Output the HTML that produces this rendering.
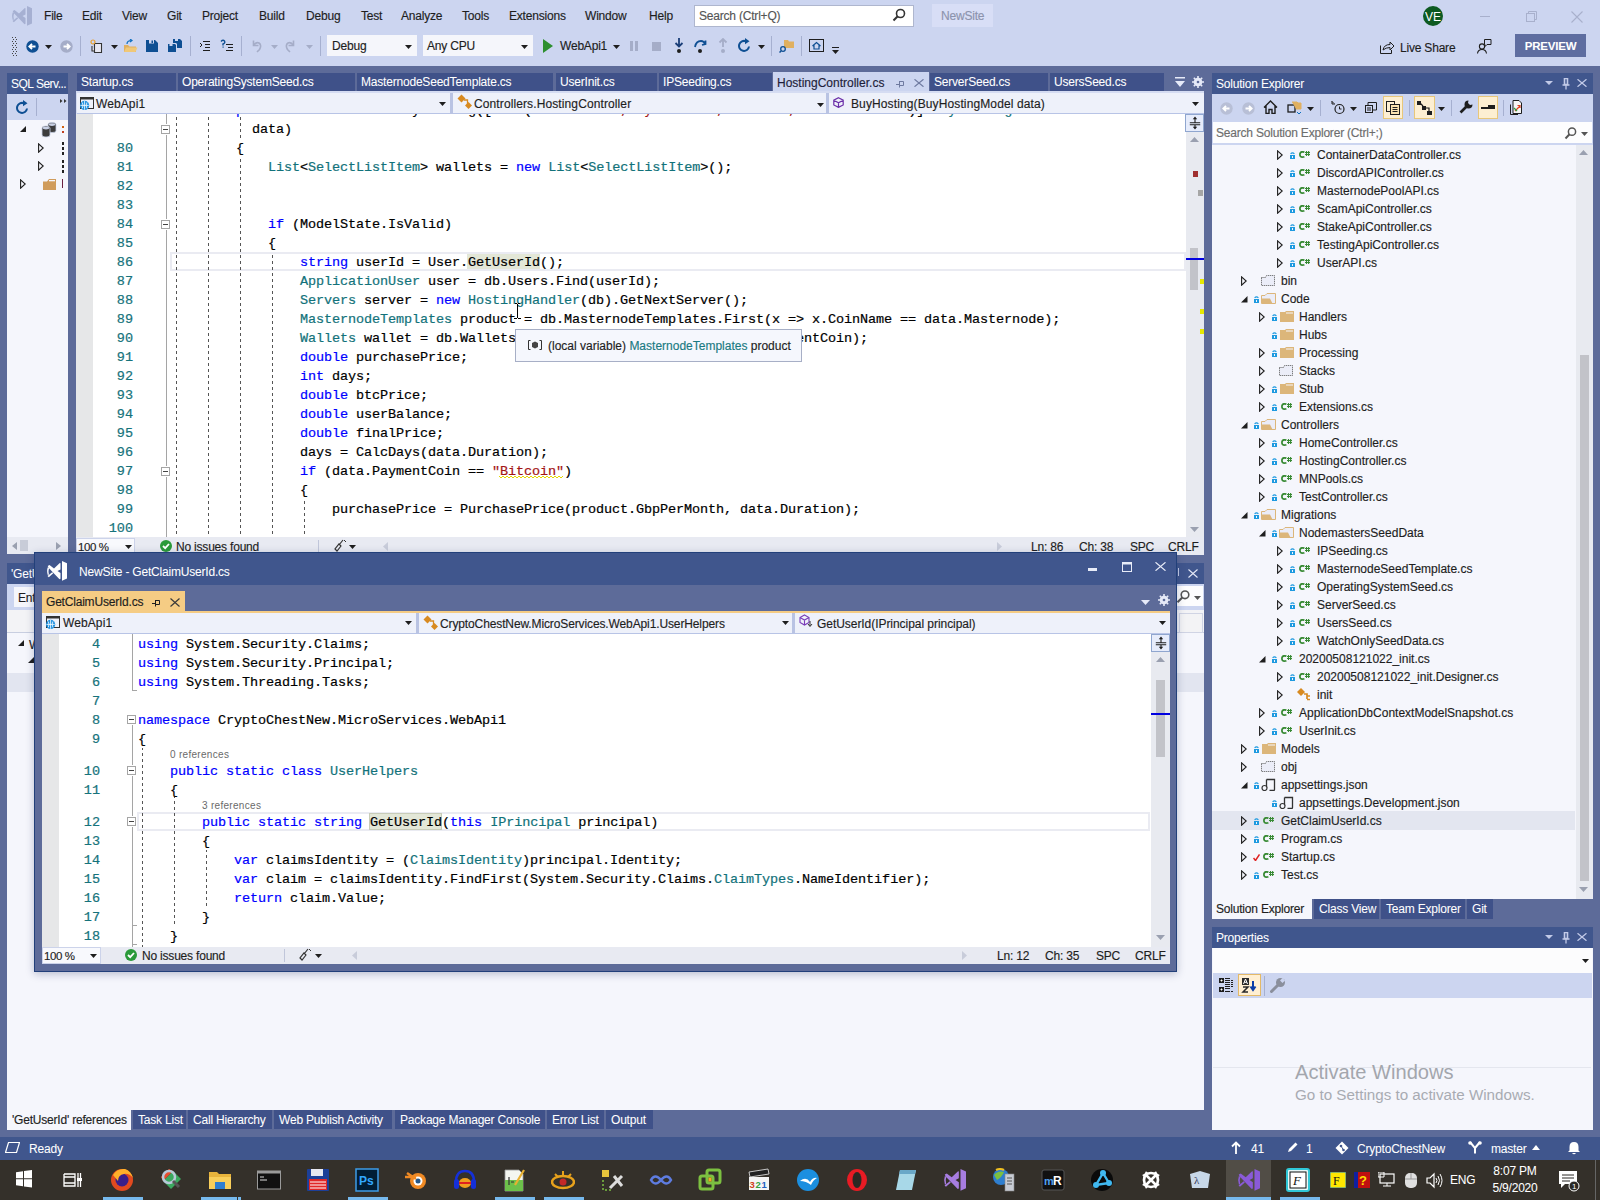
<!DOCTYPE html><html><head><meta charset="utf-8"><style>
*{margin:0;padding:0;box-sizing:border-box}
html,body{width:1600px;height:1200px;overflow:hidden;background:#CCD5F0;font-family:"Liberation Sans",sans-serif;font-size:12px;color:#1E1E1E}
.a{position:absolute}
.t{white-space:nowrap;line-height:16px;font-size:12px;letter-spacing:-0.2px;-webkit-text-stroke:0.15px currentColor}
.m{font-family:"Liberation Mono",monospace;white-space:pre;font-size:13.5px;letter-spacing:-0.1px;line-height:19px;color:#000;-webkit-text-stroke:0.2px currentColor}
.w{color:#fff}
.k{color:#0000FF}.ty{color:#12727A}.s{color:#A31515}
.ln{color:#16737B;text-align:right;letter-spacing:0}
</style></head><body><div class="a" style="left:0px;top:0px;width:1600px;height:66px;background:#CCD5F0;"></div>
<svg class="a" style="left:12px;top:6px;" width="20" height="20" viewBox="0 0 20 20"><path d="M0.7 5 L2.5 4 L7 7.5 L12.8 2 L13.5 2.3 V8.5 L10.5 10 L13.5 12 V17.8 L12.5 18.2 L1.5 6.8 Z M0.8 6.3 Q-0.6 10 0.8 14 L2 13.6 Q1 10 2.1 7.4 Z M0.5 15 L1.8 16.2 L6.2 12.3 L5.2 11.2 Z M15 0 L20 2.2 V17.5 L15 19.8 Z" fill="#A6B0D2"/></svg>
<div class="a t" style="left:44px;top:8px;color:#1E1E1E">File</div>
<div class="a t" style="left:82px;top:8px;color:#1E1E1E">Edit</div>
<div class="a t" style="left:122px;top:8px;color:#1E1E1E">View</div>
<div class="a t" style="left:167px;top:8px;color:#1E1E1E">Git</div>
<div class="a t" style="left:202px;top:8px;color:#1E1E1E">Project</div>
<div class="a t" style="left:259px;top:8px;color:#1E1E1E">Build</div>
<div class="a t" style="left:306px;top:8px;color:#1E1E1E">Debug</div>
<div class="a t" style="left:361px;top:8px;color:#1E1E1E">Test</div>
<div class="a t" style="left:401px;top:8px;color:#1E1E1E">Analyze</div>
<div class="a t" style="left:462px;top:8px;color:#1E1E1E">Tools</div>
<div class="a t" style="left:509px;top:8px;color:#1E1E1E">Extensions</div>
<div class="a t" style="left:585px;top:8px;color:#1E1E1E">Window</div>
<div class="a t" style="left:649px;top:8px;color:#1E1E1E">Help</div>
<div class="a" style="left:694px;top:5px;width:220px;height:22px;background:#FFFFFF;border:1px solid #AEB6CE"></div>
<div class="a t" style="left:699px;top:8px;color:#555">Search (Ctrl+Q)</div>
<svg class="a" style="left:892px;top:8px;" width="14" height="15" viewBox="0 0 14 15"><circle cx="8.5" cy="5.5" r="4" fill="none" stroke="#333" stroke-width="1.6"/><path d="M5.7 8.3 L1.5 12.5" stroke="#333" stroke-width="2"/></svg>
<div class="a" style="left:932px;top:4px;width:61px;height:23px;background:#D8DEF6;"></div>
<div class="a t" style="left:941px;top:8px;color:#8C93AD">NewSite</div>
<svg class="a" style="left:1423px;top:6px;" width="20" height="20" viewBox="0 0 20 20"><circle cx="10" cy="10" r="10" fill="#0D5A21"/><text x="10" y="14.5" text-anchor="middle" font-family="Liberation Sans" font-size="12" fill="#fff">VE</text></svg>
<div class="a" style="left:1480px;top:16px;width:10px;height:1px;background:#A8B0CC;"></div>
<svg class="a" style="left:1526px;top:11px;" width="11" height="11" viewBox="0 0 11 11"><rect x="0.5" y="2.5" width="8" height="8" fill="none" stroke="#A8B0CC"/><path d="M2.5 2.5V0.5H10.5V8.5H8.5" fill="none" stroke="#A8B0CC"/></svg>
<svg class="a" style="left:1571px;top:11px;" width="12" height="12" viewBox="0 0 12 12"><path d="M0.5 0.5L11.5 11.5M11.5 0.5L0.5 11.5" stroke="#A8B0CC" stroke-width="1.1"/></svg>
<div class="a" style="left:12px;top:37px;width:1px;height:1px;background:#444;"></div>
<div class="a" style="left:13px;top:39px;width:1px;height:1px;background:#444;"></div>
<div class="a" style="left:15px;top:37px;width:1px;height:1px;background:#444;"></div>
<div class="a" style="left:16px;top:39px;width:1px;height:1px;background:#444;"></div>
<div class="a" style="left:12px;top:41px;width:1px;height:1px;background:#444;"></div>
<div class="a" style="left:13px;top:43px;width:1px;height:1px;background:#444;"></div>
<div class="a" style="left:15px;top:41px;width:1px;height:1px;background:#444;"></div>
<div class="a" style="left:16px;top:43px;width:1px;height:1px;background:#444;"></div>
<div class="a" style="left:12px;top:45px;width:1px;height:1px;background:#444;"></div>
<div class="a" style="left:13px;top:47px;width:1px;height:1px;background:#444;"></div>
<div class="a" style="left:15px;top:45px;width:1px;height:1px;background:#444;"></div>
<div class="a" style="left:16px;top:47px;width:1px;height:1px;background:#444;"></div>
<div class="a" style="left:12px;top:49px;width:1px;height:1px;background:#444;"></div>
<div class="a" style="left:13px;top:51px;width:1px;height:1px;background:#444;"></div>
<div class="a" style="left:15px;top:49px;width:1px;height:1px;background:#444;"></div>
<div class="a" style="left:16px;top:51px;width:1px;height:1px;background:#444;"></div>
<div class="a" style="left:12px;top:53px;width:1px;height:1px;background:#444;"></div>
<div class="a" style="left:13px;top:55px;width:1px;height:1px;background:#444;"></div>
<div class="a" style="left:15px;top:53px;width:1px;height:1px;background:#444;"></div>
<div class="a" style="left:16px;top:55px;width:1px;height:1px;background:#444;"></div>
<svg class="a" style="left:26px;top:40px;" width="13" height="13" viewBox="0 0 13 13"><circle cx="6.5" cy="6.5" r="6.2" fill="#0E4F93"/><path d="M9.5 6.5H3.5M6 3.8L3.3 6.5L6 9.2" stroke="#fff" stroke-width="1.8" fill="none"/></svg>
<svg class="a" style="left:45px;top:45px;" width="7" height="4" viewBox="0 0 7 4"><path d="M0 0H7L3.5 4Z" fill="#1E1E1E"/></svg>
<svg class="a" style="left:60px;top:40px;" width="13" height="13" viewBox="0 0 13 13"><circle cx="6.5" cy="6.5" r="6.2" fill="#A5ADC8"/><path d="M3.5 6.5H9.5M7 3.8L9.7 6.5L7 9.2" stroke="#fff" stroke-width="1.8" fill="none"/></svg>
<div class="a" style="left:80px;top:36px;width:1px;height:20px;background:#A6B0D0;"></div>
<svg class="a" style="left:90px;top:39px;" width="14" height="15" viewBox="0 0 14 15"><path d="M4.5 4.5H11.5V13.5H4.5Z M2 7V12H5" fill="#E8E8F2" stroke="#333" stroke-width="1.1"/><circle cx="3" cy="3" r="2" fill="none" stroke="#E8A030" stroke-width="1.2"/></svg>
<svg class="a" style="left:111px;top:45px;" width="7" height="4" viewBox="0 0 7 4"><path d="M0 0H7L3.5 4Z" fill="#1E1E1E"/></svg>
<svg class="a" style="left:123px;top:39px;" width="15" height="14" viewBox="0 0 15 14"><path d="M1 6H5L6.5 7.5H13V13H1Z" fill="#E0B060"/><path d="M1 13L3 8.5H14.5L12.5 13Z" fill="#F0C878"/><path d="M4 5C4 2.5 6 1.5 8.5 1.5M7 0L9 1.5L7 3" stroke="#0E70C0" stroke-width="1.2" fill="none"/></svg>
<svg class="a" style="left:146px;top:40px;" width="12" height="12" viewBox="0 0 12 12"><path d="M0 0H9L12 3V12H0Z" fill="#0E4F93"/><rect x="3" y="0" width="5" height="3.5" fill="#CCD5F0"/><rect x="5.5" y="0.5" width="1.5" height="2.5" fill="#0E4F93"/></svg>
<svg class="a" style="left:168px;top:39px;" width="14" height="14" viewBox="0 0 14 14"><path d="M0 5H7L8 6V13H0Z" fill="#0E4F93"/><path d="M5 0H12L14 2V9H9V5L8 4H5Z" fill="#0E4F93"/><rect x="1.5" y="5" width="3" height="2" fill="#CCD5F0"/><rect x="7" y="0" width="3" height="2" fill="#CCD5F0"/></svg>
<div class="a" style="left:190px;top:36px;width:1px;height:20px;background:#A6B0D0;"></div>
<svg class="a" style="left:199px;top:40px;" width="12" height="12" viewBox="0 0 12 12"><path d="M4 1.5H11M6 4.5H11M6 7.5H11M4 10.5H11" stroke="#1E1E1E" stroke-width="1"/><path d="M1 3L3 5L1 7" stroke="#1E1E1E" fill="none"/></svg>
<svg class="a" style="left:220px;top:39px;" width="14" height="14" viewBox="0 0 14 14"><path d="M6 5.5H13M8 8.5H13M6 11.5H13" stroke="#1E1E1E"/><path d="M1 2.5Q3 0.5 4.5 2Q5.5 4 3 5V6.5" stroke="#0E4F93" stroke-width="1.4" fill="none"/><rect x="2.5" y="7.5" width="1.2" height="1.2" fill="#0E4F93"/></svg>
<div class="a" style="left:241px;top:36px;width:1px;height:20px;background:#A6B0D0;"></div>
<svg class="a" style="left:250px;top:39px;" width="12" height="14" viewBox="0 0 12 14"><path d="M3.5 1.5V6.5H8.5" stroke="#A5ADC8" stroke-width="1.6" fill="none"/><path d="M3.5 6.5Q6 2.5 9 4Q12 6 9.5 10.5L7 13" stroke="#A5ADC8" stroke-width="1.6" fill="none"/></svg>
<svg class="a" style="left:271px;top:45px;" width="7" height="4" viewBox="0 0 7 4"><path d="M0 0H7L3.5 4Z" fill="#A5ADC8"/></svg>
<svg class="a" style="left:285px;top:39px;" width="12" height="14" viewBox="0 0 12 14"><path d="M8.5 1.5V6.5H3.5" stroke="#A5ADC8" stroke-width="1.6" fill="none"/><path d="M8.5 6.5Q6 2.5 3 4Q0 6 2.5 10.5L5 13" stroke="#A5ADC8" stroke-width="1.6" fill="none"/></svg>
<svg class="a" style="left:306px;top:45px;" width="7" height="4" viewBox="0 0 7 4"><path d="M0 0H7L3.5 4Z" fill="#A5ADC8"/></svg>
<div class="a" style="left:320px;top:36px;width:1px;height:20px;background:#A6B0D0;"></div>
<div class="a" style="left:327px;top:35px;width:90px;height:21px;background:#F5F6FB;"></div>
<div class="a t" style="left:332px;top:38px;">Debug</div>
<svg class="a" style="left:405px;top:45px;" width="7" height="4" viewBox="0 0 7 4"><path d="M0 0H7L3.5 4Z" fill="#1E1E1E"/></svg>
<div class="a" style="left:423px;top:35px;width:110px;height:21px;background:#F5F6FB;"></div>
<div class="a t" style="left:427px;top:38px;">Any CPU</div>
<svg class="a" style="left:521px;top:45px;" width="7" height="4" viewBox="0 0 7 4"><path d="M0 0H7L3.5 4Z" fill="#1E1E1E"/></svg>
<svg class="a" style="left:543px;top:39px;" width="10" height="14" viewBox="0 0 10 14"><path d="M0 0L10 7L0 14Z" fill="#2C8F2F"/></svg>
<div class="a t" style="left:560px;top:38px;">WebApi1</div>
<svg class="a" style="left:613px;top:45px;" width="7" height="4" viewBox="0 0 7 4"><path d="M0 0H7L3.5 4Z" fill="#1E1E1E"/></svg>
<div class="a" style="left:630px;top:41px;width:3px;height:10px;background:#A5ADC8;"></div>
<div class="a" style="left:635px;top:41px;width:3px;height:10px;background:#A5ADC8;"></div>
<div class="a" style="left:652px;top:42px;width:9px;height:9px;background:#A5ADC8;"></div>
<svg class="a" style="left:674px;top:38px;" width="10" height="16" viewBox="0 0 10 16"><path d="M5 0V8M1.5 5L5 8.5L8.5 5" stroke="#1A3E78" stroke-width="1.8" fill="none"/><circle cx="5" cy="13" r="2" fill="#1E1E1E"/></svg>
<svg class="a" style="left:693px;top:39px;" width="14" height="15" viewBox="0 0 14 15"><path d="M2 8Q3 2 8 2Q11 2 12 5M9 6L12.5 5L12.5 1.5" stroke="#0E4F93" stroke-width="1.8" fill="none"/><circle cx="7" cy="12" r="2" fill="#1E1E1E"/></svg>
<svg class="a" style="left:718px;top:38px;" width="10" height="16" viewBox="0 0 10 16"><path d="M5 9V1M1.5 4.5L5 1L8.5 4.5" stroke="#A5ADC8" stroke-width="1.8" fill="none"/><circle cx="5" cy="13" r="2" fill="#A5ADC8"/></svg>
<svg class="a" style="left:738px;top:38px;" width="14" height="15" viewBox="0 0 14 15"><path d="M11 8.5A5 5 0 1 1 8 3.3" stroke="#0E4F93" stroke-width="2" fill="none"/><path d="M7 0L11.5 3.3L7 6.3Z" fill="#0E4F93"/></svg>
<svg class="a" style="left:758px;top:45px;" width="7" height="4" viewBox="0 0 7 4"><path d="M0 0H7L3.5 4Z" fill="#1E1E1E"/></svg>
<div class="a" style="left:771px;top:36px;width:1px;height:20px;background:#A6B0D0;"></div>
<svg class="a" style="left:779px;top:38px;" width="16" height="15" viewBox="0 0 16 15"><path d="M5 2H9L10 3.5H15V10H5Z" fill="#E0B060"/><circle cx="4" cy="11" r="2.3" fill="none" stroke="#0E4F93" stroke-width="1.3"/><path d="M2.3 12.8L0.5 14.5" stroke="#0E4F93" stroke-width="1.5"/></svg>
<div class="a" style="left:801px;top:36px;width:1px;height:20px;background:#A6B0D0;"></div>
<svg class="a" style="left:809px;top:39px;" width="15" height="13" viewBox="0 0 15 13"><rect x="0.5" y="0.5" width="14" height="12" fill="none" stroke="#1E1E1E"/><path d="M3.5 7L7.5 3.5L11.5 7M5 6V10H10V6" stroke="#0E4F93" stroke-width="1.2" fill="none"/></svg>
<div class="a" style="left:832px;top:47px;width:7px;height:1px;background:#1E1E1E;"></div>
<svg class="a" style="left:832px;top:50px;" width="7" height="4" viewBox="0 0 7 4"><path d="M0 0H7L3.5 4Z" fill="#1E1E1E"/></svg>
<svg class="a" style="left:1380px;top:40px;" width="15" height="14" viewBox="0 0 15 14"><path d="M0.5 5.5V13.5H11.5V10" stroke="#1E1E1E" fill="none"/><path d="M3 10Q4 4.5 10 4.5V2L14 6L10 10V7.5Q6 7.5 3 10Z" stroke="#1E1E1E" fill="none" stroke-linejoin="round"/></svg>
<div class="a t" style="left:1400px;top:40px;">Live Share</div>
<svg class="a" style="left:1477px;top:39px;" width="15" height="15" viewBox="0 0 15 15"><circle cx="5" cy="7.5" r="2.6" fill="none" stroke="#1E1E1E" stroke-width="1.1"/><path d="M0.5 14.5Q1 10.5 5 10.5Q9 10.5 9.5 14.5" fill="none" stroke="#1E1E1E" stroke-width="1.1"/><path d="M7.5 0.5H14V5.5H10L8 7.5V5.5H7.5Z" fill="none" stroke="#1E1E1E" stroke-width="1"/></svg>
<div class="a" style="left:1515px;top:34px;width:71px;height:23px;background:#5E6DA0;"></div>
<div class="a t" style="left:1515px;top:38px;width:71px;text-align:center;font-weight:bold;color:#fff;font-size:11.5px;-webkit-text-stroke:0.05px #fff">PREVIEW</div>
<div class="a" style="left:0px;top:66px;width:1600px;height:1071px;background:#5D6B99;"></div>
<div class="a" style="left:7px;top:73px;width:61px;height:21px;background:#40568D;"></div>
<div class="a t" style="left:11px;top:76px;color:#fff;letter-spacing:-0.5px;-webkit-text-stroke:0.05px #fff">SQL Serv...</div>
<div class="a" style="left:7px;top:94px;width:61px;height:26px;background:#CCD5F0;"></div>
<svg class="a" style="left:16px;top:100px;" width="13" height="14" viewBox="0 0 13 14"><path d="M11 8.5A5 5 0 1 1 8 3.3" stroke="#0E4F93" stroke-width="2" fill="none"/><path d="M7 0L11.5 3.3L7 6.3Z" fill="#0E4F93"/></svg>
<div class="a" style="left:36px;top:98px;width:1px;height:18px;background:#A6B0D0;"></div>
<svg class="a" style="left:60px;top:99px;" width="7" height="5" viewBox="0 0 7 5"><path d="M0 0L2.5 2L0 4ZM4 0L6.5 2L4 4Z" fill="#333"/></svg>
<div class="a" style="left:7px;top:120px;width:61px;height:417px;background:#F5F6FC;"></div>
<svg class="a" style="left:20px;top:126px;" width="6" height="6" viewBox="0 0 6 6"><path d="M6 0V6H0Z" fill="#1E1E1E"/></svg>
<svg class="a" style="left:41px;top:122px;" width="16" height="16" viewBox="0 0 16 16"><path d="M7 2.5Q7 0.5 11 0.5Q15 0.5 15 2.5V9Q15 10.5 11 10.5Q7 10.5 7 9Z" fill="#3C3C3C" stroke="#C8D0E4" stroke-width="0.8"/><ellipse cx="11" cy="2.6" rx="3.3" ry="1.3" fill="#C8D0E4"/><path d="M1 6Q1 4 5 4Q9 4 9 6V13Q9 15 5 15Q1 15 1 13Z" fill="#3C3C3C" stroke="#C8D0E4" stroke-width="0.8"/><ellipse cx="5" cy="6.1" rx="3.3" ry="1.3" fill="#C8D0E4"/></svg>
<div class="a" style="left:62px;top:126px;width:2px;height:2px;background:#D06010;"></div>
<div class="a" style="left:62px;top:131px;width:2px;height:2px;background:#C04020;"></div>
<svg class="a" style="left:38px;top:143px;" width="6" height="10" viewBox="0 0 6 10"><path d="M0.6 0.8L5.2 5L0.6 9.2Z" fill="none" stroke="#1E1E1E" stroke-width="1.1"/></svg>
<div class="a" style="left:62px;top:142px;width:2px;height:14px;background:transparent;background-image:linear-gradient(#222 70%,transparent 70%);background-size:2px 5px"></div>
<svg class="a" style="left:38px;top:161px;" width="6" height="10" viewBox="0 0 6 10"><path d="M0.6 0.8L5.2 5L0.6 9.2Z" fill="none" stroke="#1E1E1E" stroke-width="1.1"/></svg>
<div class="a" style="left:62px;top:160px;width:2px;height:14px;background:transparent;background-image:linear-gradient(#222 70%,transparent 70%);background-size:2px 5px"></div>
<svg class="a" style="left:20px;top:179px;" width="6" height="10" viewBox="0 0 6 10"><path d="M0.6 0.8L5.2 5L0.6 9.2Z" fill="none" stroke="#1E1E1E" stroke-width="1.1"/></svg>
<svg class="a" style="left:43px;top:179px;" width="14" height="11" viewBox="0 0 14 11"><path d="M0 2.5H4L6 0H13V11H0Z" fill="#D09C5C"/><rect x="6" y="1" width="6" height="1.3" fill="#F5F6FC"/></svg>
<div class="a" style="left:62px;top:179px;width:1px;height:9px;background:#6A2040;"></div>
<div class="a" style="left:7px;top:537px;width:61px;height:17px;background:#E8EAF2;"></div>
<svg class="a" style="left:12px;top:542px;" width="5" height="8" viewBox="0 0 5 8"><path d="M5 0V8L0 4Z" fill="#9AA0B0"/></svg>
<div class="a" style="left:20px;top:540px;width:8px;height:11px;background:#C8CCD8;"></div>
<svg class="a" style="left:56px;top:542px;" width="5" height="8" viewBox="0 0 5 8"><path d="M0 0V8L5 4Z" fill="#9AA0B0"/></svg>
<div class="a" style="left:77px;top:73px;width:99px;height:18px;background:#3F5189;"></div>
<div class="a t" style="left:81px;top:74px;color:#fff;-webkit-text-stroke:0.05px #fff">Startup.cs</div>
<div class="a" style="left:178px;top:73px;width:177px;height:18px;background:#3F5189;"></div>
<div class="a t" style="left:182px;top:74px;color:#fff;-webkit-text-stroke:0.05px #fff">OperatingSystemSeed.cs</div>
<div class="a" style="left:357px;top:73px;width:196px;height:18px;background:#3F5189;"></div>
<div class="a t" style="left:361px;top:74px;color:#fff;-webkit-text-stroke:0.05px #fff">MasternodeSeedTemplate.cs</div>
<div class="a" style="left:556px;top:73px;width:101px;height:18px;background:#3F5189;"></div>
<div class="a t" style="left:560px;top:74px;color:#fff;-webkit-text-stroke:0.05px #fff">UserInit.cs</div>
<div class="a" style="left:659px;top:73px;width:113px;height:18px;background:#3F5189;"></div>
<div class="a t" style="left:663px;top:74px;color:#fff;-webkit-text-stroke:0.05px #fff">IPSeeding.cs</div>
<div class="a" style="left:930px;top:73px;width:118px;height:18px;background:#3F5189;"></div>
<div class="a t" style="left:934px;top:74px;color:#fff;-webkit-text-stroke:0.05px #fff">ServerSeed.cs</div>
<div class="a" style="left:1050px;top:73px;width:114px;height:18px;background:#3F5189;"></div>
<div class="a t" style="left:1054px;top:74px;color:#fff;-webkit-text-stroke:0.05px #fff">UsersSeed.cs</div>
<div class="a" style="left:773px;top:72px;width:156px;height:19px;background:#CCD5F0;"></div>
<div class="a t" style="left:777px;top:75px;letter-spacing:0;color:#1E1E3A">HostingController.cs</div>
<svg class="a" style="left:896px;top:80px;" width="9" height="8" viewBox="0 0 9 8"><path d="M0 4.5H3.5M3.5 1V7.5M3.5 1.5H7.5V5.5H3.5" stroke="#6F7AA0" fill="none"/></svg>
<svg class="a" style="left:914px;top:79px;" width="10" height="8" viewBox="0 0 10 8"><path d="M0.5 0.3L9.5 7.7M9.5 0.3L0.5 7.7" stroke="#6F7AA0" stroke-width="1.2"/></svg>
<svg class="a" style="left:1175px;top:77px;" width="10" height="10" viewBox="0 0 10 10"><path d="M0 0H10V1.5H0Z M0 4H10L5 10Z" fill="#E6EAF8"/></svg>
<svg class="a" style="left:1192px;top:76px;" width="12" height="12" viewBox="0 0 12 12"><circle cx="6" cy="6" r="3.2" fill="none" stroke="#E6EAF8" stroke-width="2.2"/><path d="M6 0V12M0 6H12M1.8 1.8L10.2 10.2M10.2 1.8L1.8 10.2" stroke="#E6EAF8" stroke-width="1.6"/><circle cx="6" cy="6" r="1.3" fill="#5D6B99"/></svg>
<div class="a" style="left:76px;top:91px;width:1128px;height:23px;background:#D5DCF2;"></div>
<div class="a" style="left:77px;top:93px;width:1127px;height:21px;background:#EEF1FA;border-bottom:1px solid #B8C4E6"></div>
<div class="a" style="left:450px;top:93px;width:3px;height:21px;background:#B9C3E3;"></div>
<div class="a" style="left:826px;top:93px;width:3px;height:21px;background:#B9C3E3;"></div>
<svg class="a" style="left:80px;top:97px;" width="14" height="13" viewBox="0 0 14 13"><rect x="0.5" y="0.5" width="13" height="11" fill="#EEF1FA" stroke="#333"/><rect x="0.5" y="0.5" width="13" height="2" fill="#333"/><circle cx="4.6" cy="8.4" r="4.6" fill="#1E90E0"/><path d="M0.5 8.4H8.7M4.6 4V12.8M2.3 5.5Q3.8 8.4 2.3 11.3M6.9 5.5Q5.4 8.4 6.9 11.3" stroke="#fff" stroke-width="0.8" fill="none"/></svg>
<div class="a t" style="left:96px;top:96px;letter-spacing:0.1px">WebApi1</div>
<svg class="a" style="left:439px;top:102px;" width="7" height="4" viewBox="0 0 7 4"><path d="M0 0H7L3.5 4Z" fill="#1E1E1E"/></svg>
<svg class="a" style="left:457px;top:94px;" width="16" height="16" viewBox="0 0 16 16"><path d="M4.5 0.5L8.5 4.5L4.5 8.5L0.5 4.5Z" fill="#D88A20"/><path d="M7 6H10.5V11" stroke="#D88A20" stroke-width="1.3" fill="none"/><path d="M11.5 8L15 11.5L11.5 15L8 11.5Z" fill="#D88A20"/></svg>
<div class="a t" style="left:474px;top:96px;letter-spacing:0.11px">Controllers.HostingController</div>
<svg class="a" style="left:817px;top:103px;" width="7" height="4" viewBox="0 0 7 4"><path d="M0 0H7L3.5 4Z" fill="#1E1E1E"/></svg>
<svg class="a" style="left:833px;top:97px;" width="11" height="11" viewBox="0 0 11 11"><path d="M5.5 0.7L10.2 3.2V8L5.5 10.4L0.8 8V3.2Z M0.8 3.2L5.5 5.7L10.2 3.2M5.5 5.7V10.4" stroke="#6B2FA8" stroke-width="1.2" fill="none"/></svg>
<div class="a t" style="left:851px;top:96px;letter-spacing:0.12px">BuyHosting(BuyHostingModel data)</div>
<svg class="a" style="left:1192px;top:102px;" width="7" height="4" viewBox="0 0 7 4"><path d="M0 0H7L3.5 4Z" fill="#1E1E1E"/></svg>
<div class="a" style="left:76px;top:114px;width:1128px;height:423px;background:#fff;overflow:hidden">
<div class="a" style="left:0px;top:0px;width:17px;height:423px;background:#E6E7E8;"></div>
<div class="a" style="left:94px;top:138px;width:1016px;height:19px;background:transparent;border:2px solid #EAEBF2"></div>
<div class="a" style="left:391px;top:140px;width:73px;height:15px;background:#E3E7D7;"></div>
<div class="a m" style="left:176px;top:6px;">data)</div>
<div class="a m" style="left:160px;top:25px;">{</div>
<div class="a m" style="left:192px;top:44px;"><span class="ty">List</span>&lt;<span class="ty">SelectListItem</span>&gt; wallets = <span class="k">new</span> <span class="ty">List</span>&lt;<span class="ty">SelectListItem</span>&gt;();</div>
<div class="a m" style="left:192px;top:101px;"><span class="k">if</span> (ModelState.IsValid)</div>
<div class="a m" style="left:192px;top:120px;">{</div>
<div class="a m" style="left:224px;top:139px;"><span class="k">string</span> userId = User.GetUserId();</div>
<div class="a m" style="left:224px;top:158px;"><span class="ty">ApplicationUser</span> user = db.Users.Find(userId);</div>
<div class="a m" style="left:224px;top:177px;"><span class="ty">Servers</span> server = <span class="k">new</span> <span class="ty">HostingHandler</span>(db).GetNextServer();</div>
<div class="a m" style="left:224px;top:196px;"><span class="ty">MasternodeTemplates</span> product = db.MasternodeTemplates.First(x =&gt; x.CoinName == data.Masternode);</div>
<div class="a m" style="left:224px;top:215px;"><span class="ty">Wallets</span> wallet = db.Wallets.First(x =&gt; x.CoinName == data.PaymentCoin);</div>
<div class="a m" style="left:224px;top:234px;"><span class="k">double</span> purchasePrice;</div>
<div class="a m" style="left:224px;top:253px;"><span class="k">int</span> days;</div>
<div class="a m" style="left:224px;top:272px;"><span class="k">double</span> btcPrice;</div>
<div class="a m" style="left:224px;top:291px;"><span class="k">double</span> userBalance;</div>
<div class="a m" style="left:224px;top:310px;"><span class="k">double</span> finalPrice;</div>
<div class="a m" style="left:224px;top:329px;">days = CalcDays(data.Duration);</div>
<div class="a m" style="left:224px;top:348px;"><span class="k">if</span> (data.PaymentCoin == <span class="s">"Bitcoin"</span>)</div>
<div class="a m" style="left:224px;top:367px;">{</div>
<div class="a m" style="left:256px;top:386px;">purchasePrice = PurchasePrice(product.GbpPerMonth, data.Duration);</div>
<div class="a m" style="left:160px;top:-13px;"><span class="k">public</span> <span class="ty">ActionResult</span> BuyHosting([<span class="ty">Bind</span>(<span class="s">"Masternode,PaymentCoin,Duration,ServerNameTwo"</span>)] <span class="ty">BuyHostingModel</span></div>
<div class="a m ln" style="left:0px;top:25px;width:57px">80</div>
<div class="a m ln" style="left:0px;top:44px;width:57px">81</div>
<div class="a m ln" style="left:0px;top:63px;width:57px">82</div>
<div class="a m ln" style="left:0px;top:82px;width:57px">83</div>
<div class="a m ln" style="left:0px;top:101px;width:57px">84</div>
<div class="a m ln" style="left:0px;top:120px;width:57px">85</div>
<div class="a m ln" style="left:0px;top:139px;width:57px">86</div>
<div class="a m ln" style="left:0px;top:158px;width:57px">87</div>
<div class="a m ln" style="left:0px;top:177px;width:57px">88</div>
<div class="a m ln" style="left:0px;top:196px;width:57px">89</div>
<div class="a m ln" style="left:0px;top:215px;width:57px">90</div>
<div class="a m ln" style="left:0px;top:234px;width:57px">91</div>
<div class="a m ln" style="left:0px;top:253px;width:57px">92</div>
<div class="a m ln" style="left:0px;top:272px;width:57px">93</div>
<div class="a m ln" style="left:0px;top:291px;width:57px">94</div>
<div class="a m ln" style="left:0px;top:310px;width:57px">95</div>
<div class="a m ln" style="left:0px;top:329px;width:57px">96</div>
<div class="a m ln" style="left:0px;top:348px;width:57px">97</div>
<div class="a m ln" style="left:0px;top:367px;width:57px">98</div>
<div class="a m ln" style="left:0px;top:386px;width:57px">99</div>
<div class="a m ln" style="left:0px;top:405px;width:57px">100</div>
<div class="a" style="left:90px;top:0px;width:1px;height:423px;background:#A5A5A5;"></div>
<div class="a" style="left:85px;top:10px;width:9px;height:11px;background:#fff;"></div>
<div class="a" style="left:85px;top:11px;width:9px;height:9px;background:#fff;border:1px solid #A5A5A5"></div>
<div class="a" style="left:87px;top:15px;width:5px;height:1px;background:#444;"></div>
<div class="a" style="left:85px;top:105px;width:9px;height:11px;background:#fff;"></div>
<div class="a" style="left:85px;top:106px;width:9px;height:9px;background:#fff;border:1px solid #A5A5A5"></div>
<div class="a" style="left:87px;top:110px;width:5px;height:1px;background:#444;"></div>
<div class="a" style="left:85px;top:352px;width:9px;height:11px;background:#fff;"></div>
<div class="a" style="left:85px;top:353px;width:9px;height:9px;background:#fff;border:1px solid #A5A5A5"></div>
<div class="a" style="left:87px;top:357px;width:5px;height:1px;background:#444;"></div>
<div class="a" style="left:100px;top:0px;width:1px;height:423px;background:transparent;background-image:linear-gradient(transparent 50%,#555 50%);background-size:1px 6px;background-position:0 0px"></div>
<div class="a" style="left:132px;top:0px;width:1px;height:423px;background:transparent;background-image:linear-gradient(transparent 50%,#555 50%);background-size:1px 6px;background-position:0 0px"></div>
<div class="a" style="left:164px;top:0px;width:1px;height:24px;background:transparent;background-image:linear-gradient(transparent 50%,#555 50%);background-size:1px 6px;background-position:0 0px"></div>
<div class="a" style="left:164px;top:43px;width:1px;height:380px;background:transparent;background-image:linear-gradient(transparent 50%,#555 50%);background-size:1px 6px;background-position:0 5px"></div>
<div class="a" style="left:196px;top:138px;width:1px;height:285px;background:transparent;background-image:linear-gradient(transparent 50%,#555 50%);background-size:1px 6px;background-position:0 0px"></div>
<div class="a" style="left:228px;top:385px;width:1px;height:38px;background:transparent;background-image:linear-gradient(transparent 50%,#555 50%);background-size:1px 6px;background-position:0 5px"></div>
<svg class="a" style="left:423px;top:362px" width="64" height="4"><path d="M0 0L2 2L4 0L6 2L8 0L10 2L12 0L14 2L16 0L18 2L20 0L22 2L24 0L26 2L28 0L30 2L32 0L34 2L36 0L38 2L40 0L42 2L44 0L46 2L48 0L50 2L52 0L54 2L56 0L58 2L60 0L62 2L64 0" stroke="#E4D800" fill="none" stroke-width="1"/></svg>
<div class="a" style="left:1110px;top:0px;width:18px;height:423px;background:#E8EAF0;"></div>
<div class="a" style="left:1109px;top:0px;width:19px;height:18px;background:#E6ECFB;border:1px solid #8FA6CF"></div>
<svg class="a" style="left:1113px;top:2px" width="12" height="14"><path d="M6 2.5V6.5M6 8.5V11.5M0.8 6.8H11.2M0.8 8.8H11.2" stroke="#1E1E1E" stroke-width="1.1" fill="none"/><path d="M3.8 3.2L6 0.5L8.2 3.2Z M3.8 10.8L6 13.5L8.2 10.8Z" fill="#1E1E1E"/></svg>
<svg class="a" style="left:1114px;top:23px" width="9" height="5"><path d="M0 5L4.5 0L9 5Z" fill="#9AA0B0"/></svg>
<svg class="a" style="left:1114px;top:413px" width="9" height="5"><path d="M0 0L4.5 5L9 0Z" fill="#9AA0B0"/></svg>
<div class="a" style="left:1114px;top:134px;width:8px;height:42px;background:#C2C3C9;"></div>
<div class="a" style="left:1110px;top:144px;width:18px;height:2px;background:#0000E0;"></div>
<div class="a" style="left:1117px;top:57px;width:5px;height:6px;background:#A03030;"></div>
<div class="a" style="left:1122px;top:76px;width:5px;height:6px;background:#A6A6A6;"></div>
<div class="a" style="left:1124px;top:165px;width:4px;height:5px;background:#E8E800;"></div>
<div class="a" style="left:1124px;top:195px;width:4px;height:5px;background:#E8E800;"></div>
<div class="a" style="left:1124px;top:215px;width:4px;height:5px;background:#E8E800;"></div>
</div>
<div class="a" style="left:515px;top:303px;width:2px;height:1px;background:#000;"></div>
<div class="a" style="left:518px;top:303px;width:2px;height:1px;background:#000;"></div>
<div class="a" style="left:517px;top:304px;width:1px;height:14px;background:#000;"></div>
<div class="a" style="left:514px;top:318px;width:3px;height:1px;background:#000;"></div>
<div class="a" style="left:518px;top:318px;width:3px;height:1px;background:#000;"></div>
<div class="a" style="left:515px;top:329px;width:287px;height:33px;background:#F5F7FD;border:1px solid #A7AFC6"></div>
<svg class="a" style="left:528px;top:340px;" width="14" height="10" viewBox="0 0 14 10"><path d="M0.5 0.5H2.5M0.5 0.5V9.5H2.5M13.5 0.5H11.5M13.5 0.5V9.5H11.5" stroke="#333" fill="none"/><path d="M4 3L7 1.5L10 3V7L7 8.5L4 7Z" fill="#444"/></svg>
<div class="a t" style="left:548px;top:338px;letter-spacing:0">(local variable) <span style="color:#1A7A82">MasternodeTemplates</span> product</div>
<div class="a" style="left:76px;top:537px;width:1128px;height:18px;background:#E8EAF2;"></div>
<div class="a" style="left:76px;top:538px;width:59px;height:17px;background:#F8F9FD;border:1px solid #CCD3EA"></div>
<div class="a t" style="left:78px;top:539px;font-size:11.5px;letter-spacing:-0.4px">100 %</div>
<svg class="a" style="left:125px;top:545px;" width="7" height="4" viewBox="0 0 7 4"><path d="M0 0H7L3.5 4Z" fill="#1E1E1E"/></svg>
<svg class="a" style="left:160px;top:540px;" width="12" height="12" viewBox="0 0 12 12"><circle cx="6" cy="6" r="6" fill="#2A9A3A"/><path d="M3 6L5.2 8.2L9 4" stroke="#fff" stroke-width="1.8" fill="none"/></svg>
<div class="a t" style="left:176px;top:539px;">No issues found</div>
<div class="a" style="left:318px;top:540px;width:1px;height:13px;background:#C0C6DA;"></div>
<svg class="a" style="left:334px;top:539px;" width="13" height="14" viewBox="0 0 13 14"><path d="M9 1L5 6M7 7L3 12L1 10L5 5Z" stroke="#333" stroke-width="1.2" fill="none"/><path d="M10 1L12 3" stroke="#333"/></svg>
<svg class="a" style="left:349px;top:545px;" width="7" height="4" viewBox="0 0 7 4"><path d="M0 0H7L3.5 4Z" fill="#1E1E1E"/></svg>
<svg class="a" style="left:383px;top:542px;" width="5" height="9" viewBox="0 0 5 9"><path d="M5 0V9L0 4.5Z" fill="#C8CCDA"/></svg>
<svg class="a" style="left:997px;top:542px;" width="5" height="9" viewBox="0 0 5 9"><path d="M0 0V9L5 4.5Z" fill="#C8CCDA"/></svg>
<div class="a t" style="left:1031px;top:539px;font-size:12px">Ln: 86</div>
<div class="a t" style="left:1079px;top:539px;font-size:12px">Ch: 38</div>
<div class="a t" style="left:1130px;top:539px;font-size:12px">SPC</div>
<div class="a t" style="left:1168px;top:539px;font-size:12px">CRLF</div>
<div class="a" style="left:7px;top:563px;width:1197px;height:21px;background:#40568D;"></div>
<div class="a t" style="left:11px;top:566px;color:#fff;-webkit-text-stroke:0.05px #fff">'GetUserId' references</div>
<div class="a" style="left:7px;top:584px;width:1197px;height:26px;background:#CCD5F0;"></div>
<div class="a" style="left:14px;top:587px;width:300px;height:20px;background:#F5F6FB;"></div>
<div class="a t" style="left:18px;top:590px;">Entire Solution</div>
<div class="a" style="left:7px;top:610px;width:1197px;height:500px;background:#F5F6FC;"></div>
<div class="a" style="left:7px;top:610px;width:1197px;height:23px;background:#F3F3F6;border-bottom:1px solid #C8CEE0"></div>
<svg class="a" style="left:18px;top:640px;" width="6" height="6" viewBox="0 0 6 6"><path d="M6 0V6H0Z" fill="#1E1E1E"/></svg>
<div class="a t" style="left:29px;top:637px;">WebApi1</div>
<svg class="a" style="left:28px;top:657px;" width="6" height="6" viewBox="0 0 6 6"><path d="M6 0V6H0Z" fill="#1E1E1E"/></svg>
<div class="a" style="left:7px;top:673px;width:1197px;height:19px;background:#E2E5F0;"></div>
<div class="a" style="left:1000px;top:586px;width:203px;height:20px;background:#FDFDFE;"></div>
<svg class="a" style="left:1176px;top:590px;" width="14" height="13" viewBox="0 0 14 13"><circle cx="9" cy="4.8" r="3.8" fill="none" stroke="#555" stroke-width="1.6"/><path d="M6.3 7.5L1.5 12.3" stroke="#555" stroke-width="2"/></svg>
<svg class="a" style="left:1194px;top:596px;" width="7" height="4" viewBox="0 0 7 4"><path d="M0 0H7L3.5 4Z" fill="#555"/></svg>
<div class="a" style="left:1178px;top:568px;width:1px;height:8px;background:#C8D0EA;"></div>
<svg class="a" style="left:1188px;top:569px;" width="10" height="9" viewBox="0 0 10 9"><path d="M0.5 0.5L9.5 8.5M9.5 0.5L0.5 8.5" stroke="#E6EAF8" stroke-width="1.1"/></svg>
<div class="a" style="left:1179px;top:613px;width:24px;height:20px;background:#F3F3F5;border:1px solid #D0D4E4"></div>
<div class="a" style="left:7px;top:1110px;width:124px;height:20px;background:#F5F6FC;"></div>
<div class="a t" style="left:12px;top:1112px;">'GetUserId' references</div>
<div class="a" style="left:133px;top:1110px;width:53px;height:19px;background:#3F5189;"></div>
<div class="a t" style="left:138px;top:1112px;color:#fff;-webkit-text-stroke:0.05px #fff">Task List</div>
<div class="a" style="left:188px;top:1110px;width:84px;height:19px;background:#3F5189;"></div>
<div class="a t" style="left:193px;top:1112px;color:#fff;-webkit-text-stroke:0.05px #fff">Call Hierarchy</div>
<div class="a" style="left:274px;top:1110px;width:118px;height:19px;background:#3F5189;"></div>
<div class="a t" style="left:279px;top:1112px;color:#fff;-webkit-text-stroke:0.05px #fff">Web Publish Activity</div>
<div class="a" style="left:395px;top:1110px;width:150px;height:19px;background:#3F5189;"></div>
<div class="a t" style="left:400px;top:1112px;color:#fff;-webkit-text-stroke:0.05px #fff">Package Manager Console</div>
<div class="a" style="left:547px;top:1110px;width:57px;height:19px;background:#3F5189;"></div>
<div class="a t" style="left:552px;top:1112px;color:#fff;-webkit-text-stroke:0.05px #fff">Error List</div>
<div class="a" style="left:606px;top:1110px;width:47px;height:19px;background:#3F5189;"></div>
<div class="a t" style="left:611px;top:1112px;color:#fff;-webkit-text-stroke:0.05px #fff">Output</div>
<div class="a" style="left:1212px;top:73px;width:381px;height:21px;background:#40568D;"></div>
<div class="a t" style="left:1216px;top:76px;color:#fff;-webkit-text-stroke:0.05px #fff">Solution Explorer</div>
<svg class="a" style="left:1545px;top:81px;" width="8" height="4" viewBox="0 0 8 4"><path d="M0 0H8L4 4Z" fill="#C2CAE8"/></svg>
<svg class="a" style="left:1562px;top:78px;" width="8" height="12" viewBox="0 0 8 12"><path d="M2.5 0.5H5.5V6.5H2.5Z" fill="none" stroke="#C2CAE8" stroke-width="1.6"/><path d="M0.5 7H7.5M4 7V11.5" stroke="#C2CAE8" stroke-width="1.3"/></svg>
<svg class="a" style="left:1577px;top:79px;" width="10" height="8" viewBox="0 0 10 8"><path d="M0.5 0.3L9.5 7.7M9.5 0.3L0.5 7.7" stroke="#C2CAE8" stroke-width="1.3"/></svg>
<div class="a" style="left:1212px;top:94px;width:381px;height:26px;background:#CCD5F0;"></div>
<svg class="a" style="left:1220px;top:102px;" width="13" height="13" viewBox="0 0 13 13"><circle cx="6.5" cy="6.5" r="6.2" fill="#B8BFD6"/><path d="M9.5 6.5H3.5M6 3.8L3.3 6.5L6 9.2" stroke="#fff" stroke-width="1.8" fill="none"/></svg>
<svg class="a" style="left:1242px;top:102px;" width="13" height="13" viewBox="0 0 13 13"><circle cx="6.5" cy="6.5" r="6.2" fill="#B8BFD6"/><path d="M3.5 6.5H9.5M7 3.8L9.7 6.5L7 9.2" stroke="#fff" stroke-width="1.8" fill="none"/></svg>
<svg class="a" style="left:1263px;top:100px;" width="15" height="14" viewBox="0 0 15 14"><path d="M1 7.5L7.5 1L14 7.5M3 6V13.5H6V9.5H9V13.5H12V6" stroke="#1E1E1E" stroke-width="1.4" fill="none"/></svg>
<svg class="a" style="left:1287px;top:100px;" width="15" height="15" viewBox="0 0 15 15"><rect x="1" y="5" width="7" height="7" fill="none" stroke="#1E1E1E" stroke-width="1.3"/><path d="M5 2H10L11 3H14V9H9" fill="#E0B060" stroke="#E0B060"/><path d="M10 12L12 14L14 12" stroke="#0E70C0" fill="none"/></svg>
<svg class="a" style="left:1307px;top:107px;" width="7" height="4" viewBox="0 0 7 4"><path d="M0 0H7L3.5 4Z" fill="#1E1E1E"/></svg>
<div class="a" style="left:1320px;top:100px;width:1px;height:16px;background:#A6B0D0;"></div>
<svg class="a" style="left:1331px;top:100px;" width="15" height="15" viewBox="0 0 15 15"><circle cx="8.5" cy="9" r="4.5" fill="none" stroke="#1E1E1E" stroke-width="1.2"/><path d="M8.5 6.5V9H10.5M1 1.5L3 3.5M1 1V4H4" stroke="#1E1E1E" fill="none"/></svg>
<svg class="a" style="left:1350px;top:107px;" width="7" height="4" viewBox="0 0 7 4"><path d="M0 0H7L3.5 4Z" fill="#1E1E1E"/></svg>
<svg class="a" style="left:1365px;top:102px;" width="12" height="11" viewBox="0 0 12 11"><rect x="0.5" y="3.5" width="7" height="7" fill="#CCD5F0" stroke="#1E1E1E"/><path d="M3 3.5V0.5H11.5V8H7.5" fill="none" stroke="#1E1E1E"/><path d="M2 6H6M2 8H6" stroke="#1E1E1E"/></svg>
<div class="a" style="left:1383px;top:96px;width:20px;height:23px;background:#FDEFD2;border:1px solid #E8C77A"></div>
<svg class="a" style="left:1386px;top:101px;" width="14" height="14" viewBox="0 0 14 14"><rect x="0.5" y="0.5" width="8" height="10" fill="none" stroke="#1E1E1E"/><rect x="4.5" y="3.5" width="9" height="10" fill="#FBE3B0" stroke="#1E1E1E"/><path d="M6.5 6.5H11.5M6.5 8.5H11.5M6.5 10.5H11.5" stroke="#1E1E1E"/></svg>
<div class="a" style="left:1409px;top:100px;width:1px;height:16px;background:#A6B0D0;"></div>
<div class="a" style="left:1414px;top:96px;width:21px;height:23px;background:#FDEFD2;border:1px solid #E8C77A"></div>
<svg class="a" style="left:1417px;top:101px;" width="15" height="14" viewBox="0 0 15 14"><path d="M2 1L6 5M7 7H12V12" stroke="#1E1E1E" stroke-width="1.2" fill="none"/><rect x="0" y="0" width="4" height="4" fill="#1E1E1E"/><rect x="5" y="5" width="4" height="4" fill="#1E1E1E"/><rect x="10" y="10" width="5" height="4" fill="#1E1E1E"/></svg>
<svg class="a" style="left:1438px;top:107px;" width="7" height="4" viewBox="0 0 7 4"><path d="M0 0H7L3.5 4Z" fill="#1E1E1E"/></svg>
<div class="a" style="left:1451px;top:100px;width:1px;height:16px;background:#A6B0D0;"></div>
<svg class="a" style="left:1459px;top:100px;" width="14" height="14" viewBox="0 0 14 14"><path d="M1.5 12.5L7 7" stroke="#1E1E1E" stroke-width="2.6"/><path d="M9.5 0.5A4 4 0 1 0 13.5 4.5L11 5L9 3Z" fill="#1E1E1E"/></svg>
<div class="a" style="left:1478px;top:96px;width:20px;height:23px;background:#FDEFD2;border:1px solid #E8C77A"></div>
<div class="a" style="left:1481px;top:107px;width:14px;height:2px;background:#1E1E1E;"></div>
<div class="a" style="left:1488px;top:105px;width:7px;height:4px;background:#1E1E1E;"></div>
<div class="a" style="left:1503px;top:100px;width:1px;height:16px;background:#A6B0D0;"></div>
<svg class="a" style="left:1510px;top:100px;" width="14" height="15" viewBox="0 0 14 15"><path d="M3 0.5H9L11.5 3V13.5H3Z" fill="#F5F5F5" stroke="#1E1E1E"/><path d="M0.5 4.5V14.5H8" stroke="#1E1E1E" fill="none"/><path d="M5 11L10 6M7.5 5.5H10V8" stroke="#E04020" stroke-width="1.2" fill="none"/><path d="M4 8L7 11" stroke="#30A040" stroke-width="1.2"/></svg>
<div class="a" style="left:1212px;top:120px;width:381px;height:25px;background:#CCD5F0;"></div>
<div class="a" style="left:1213px;top:122px;width:379px;height:21px;background:#FDFDFE;"></div>
<div class="a t" style="left:1216px;top:125px;color:#6D6D6D">Search Solution Explorer (Ctrl+;)</div>
<svg class="a" style="left:1564px;top:127px;" width="13" height="13" viewBox="0 0 13 13"><circle cx="8" cy="4.7" r="3.6" fill="none" stroke="#555" stroke-width="1.5"/><path d="M5.5 7.3L1.5 11.5" stroke="#555" stroke-width="2"/></svg>
<svg class="a" style="left:1581px;top:132px;" width="7" height="4" viewBox="0 0 7 4"><path d="M0 0H7L3.5 4Z" fill="#555"/></svg>
<div class="a" style="left:1212px;top:145px;width:381px;height:754px;background:#F5F6FC;"></div>
<div class="a" style="left:1576px;top:145px;width:17px;height:754px;background:#E8EAF0;"></div>
<svg class="a" style="left:1579px;top:150px;" width="9" height="5" viewBox="0 0 9 5"><path d="M0 5L4.5 0L9 5Z" fill="#9AA0B0"/></svg>
<svg class="a" style="left:1579px;top:887px;" width="9" height="5" viewBox="0 0 9 5"><path d="M0 0L4.5 5L9 0Z" fill="#9AA0B0"/></svg>
<div class="a" style="left:1580px;top:355px;width:9px;height:526px;background:#C2C3C9;"></div>
<div class="a" style="left:1212px;top:811px;width:363px;height:19px;background:#E3E6F0;"></div>
<svg class="a" style="left:1277px;top:150px;" width="6" height="10" viewBox="0 0 6 10"><path d="M0.6 0.8L5.2 5L0.6 9.2Z" fill="none" stroke="#1E1E1E" stroke-width="1.1"/></svg>
<svg class="a" style="left:1290px;top:152px;" width="5" height="7" viewBox="0 0 5 7"><path d="M0.6 1.9Q2.5 -0.2 4.4 1.9" stroke="#1E9AE0" stroke-width="1.1" fill="none"/><rect x="0" y="3" width="5" height="4" fill="#1E9AE0"/><rect x="2" y="4" width="1" height="2" fill="#F5F6FC"/></svg>
<svg class="a" style="left:1299px;top:151px;" width="12" height="8" viewBox="0 0 12 8"><path d="M5.4 1.3Q4.6 0.8 3.4 0.8Q0.9 0.8 0.9 3.5Q0.9 6.2 3.4 6.2Q4.6 6.2 5.4 5.6" stroke="#388A34" stroke-width="1.7" fill="none"/><path d="M7.5 0V5M9.6 0V5M6 1.5H11M6 3.5H11" stroke="#388A34" stroke-width="1.1"/></svg>
<div class="a t" style="left:1317px;top:147px;letter-spacing:0">ContainerDataController.cs</div>
<svg class="a" style="left:1277px;top:168px;" width="6" height="10" viewBox="0 0 6 10"><path d="M0.6 0.8L5.2 5L0.6 9.2Z" fill="none" stroke="#1E1E1E" stroke-width="1.1"/></svg>
<svg class="a" style="left:1290px;top:170px;" width="5" height="7" viewBox="0 0 5 7"><path d="M0.6 1.9Q2.5 -0.2 4.4 1.9" stroke="#1E9AE0" stroke-width="1.1" fill="none"/><rect x="0" y="3" width="5" height="4" fill="#1E9AE0"/><rect x="2" y="4" width="1" height="2" fill="#F5F6FC"/></svg>
<svg class="a" style="left:1299px;top:169px;" width="12" height="8" viewBox="0 0 12 8"><path d="M5.4 1.3Q4.6 0.8 3.4 0.8Q0.9 0.8 0.9 3.5Q0.9 6.2 3.4 6.2Q4.6 6.2 5.4 5.6" stroke="#388A34" stroke-width="1.7" fill="none"/><path d="M7.5 0V5M9.6 0V5M6 1.5H11M6 3.5H11" stroke="#388A34" stroke-width="1.1"/></svg>
<div class="a t" style="left:1317px;top:165px;letter-spacing:0">DiscordAPIController.cs</div>
<svg class="a" style="left:1277px;top:186px;" width="6" height="10" viewBox="0 0 6 10"><path d="M0.6 0.8L5.2 5L0.6 9.2Z" fill="none" stroke="#1E1E1E" stroke-width="1.1"/></svg>
<svg class="a" style="left:1290px;top:188px;" width="5" height="7" viewBox="0 0 5 7"><path d="M0.6 1.9Q2.5 -0.2 4.4 1.9" stroke="#1E9AE0" stroke-width="1.1" fill="none"/><rect x="0" y="3" width="5" height="4" fill="#1E9AE0"/><rect x="2" y="4" width="1" height="2" fill="#F5F6FC"/></svg>
<svg class="a" style="left:1299px;top:187px;" width="12" height="8" viewBox="0 0 12 8"><path d="M5.4 1.3Q4.6 0.8 3.4 0.8Q0.9 0.8 0.9 3.5Q0.9 6.2 3.4 6.2Q4.6 6.2 5.4 5.6" stroke="#388A34" stroke-width="1.7" fill="none"/><path d="M7.5 0V5M9.6 0V5M6 1.5H11M6 3.5H11" stroke="#388A34" stroke-width="1.1"/></svg>
<div class="a t" style="left:1317px;top:183px;letter-spacing:0">MasternodePoolAPI.cs</div>
<svg class="a" style="left:1277px;top:204px;" width="6" height="10" viewBox="0 0 6 10"><path d="M0.6 0.8L5.2 5L0.6 9.2Z" fill="none" stroke="#1E1E1E" stroke-width="1.1"/></svg>
<svg class="a" style="left:1290px;top:206px;" width="5" height="7" viewBox="0 0 5 7"><path d="M0.6 1.9Q2.5 -0.2 4.4 1.9" stroke="#1E9AE0" stroke-width="1.1" fill="none"/><rect x="0" y="3" width="5" height="4" fill="#1E9AE0"/><rect x="2" y="4" width="1" height="2" fill="#F5F6FC"/></svg>
<svg class="a" style="left:1299px;top:205px;" width="12" height="8" viewBox="0 0 12 8"><path d="M5.4 1.3Q4.6 0.8 3.4 0.8Q0.9 0.8 0.9 3.5Q0.9 6.2 3.4 6.2Q4.6 6.2 5.4 5.6" stroke="#388A34" stroke-width="1.7" fill="none"/><path d="M7.5 0V5M9.6 0V5M6 1.5H11M6 3.5H11" stroke="#388A34" stroke-width="1.1"/></svg>
<div class="a t" style="left:1317px;top:201px;letter-spacing:0">ScamApiController.cs</div>
<svg class="a" style="left:1277px;top:222px;" width="6" height="10" viewBox="0 0 6 10"><path d="M0.6 0.8L5.2 5L0.6 9.2Z" fill="none" stroke="#1E1E1E" stroke-width="1.1"/></svg>
<svg class="a" style="left:1290px;top:224px;" width="5" height="7" viewBox="0 0 5 7"><path d="M0.6 1.9Q2.5 -0.2 4.4 1.9" stroke="#1E9AE0" stroke-width="1.1" fill="none"/><rect x="0" y="3" width="5" height="4" fill="#1E9AE0"/><rect x="2" y="4" width="1" height="2" fill="#F5F6FC"/></svg>
<svg class="a" style="left:1299px;top:223px;" width="12" height="8" viewBox="0 0 12 8"><path d="M5.4 1.3Q4.6 0.8 3.4 0.8Q0.9 0.8 0.9 3.5Q0.9 6.2 3.4 6.2Q4.6 6.2 5.4 5.6" stroke="#388A34" stroke-width="1.7" fill="none"/><path d="M7.5 0V5M9.6 0V5M6 1.5H11M6 3.5H11" stroke="#388A34" stroke-width="1.1"/></svg>
<div class="a t" style="left:1317px;top:219px;letter-spacing:0">StakeApiController.cs</div>
<svg class="a" style="left:1277px;top:240px;" width="6" height="10" viewBox="0 0 6 10"><path d="M0.6 0.8L5.2 5L0.6 9.2Z" fill="none" stroke="#1E1E1E" stroke-width="1.1"/></svg>
<svg class="a" style="left:1290px;top:242px;" width="5" height="7" viewBox="0 0 5 7"><path d="M0.6 1.9Q2.5 -0.2 4.4 1.9" stroke="#1E9AE0" stroke-width="1.1" fill="none"/><rect x="0" y="3" width="5" height="4" fill="#1E9AE0"/><rect x="2" y="4" width="1" height="2" fill="#F5F6FC"/></svg>
<svg class="a" style="left:1299px;top:241px;" width="12" height="8" viewBox="0 0 12 8"><path d="M5.4 1.3Q4.6 0.8 3.4 0.8Q0.9 0.8 0.9 3.5Q0.9 6.2 3.4 6.2Q4.6 6.2 5.4 5.6" stroke="#388A34" stroke-width="1.7" fill="none"/><path d="M7.5 0V5M9.6 0V5M6 1.5H11M6 3.5H11" stroke="#388A34" stroke-width="1.1"/></svg>
<div class="a t" style="left:1317px;top:237px;letter-spacing:0">TestingApiController.cs</div>
<svg class="a" style="left:1277px;top:258px;" width="6" height="10" viewBox="0 0 6 10"><path d="M0.6 0.8L5.2 5L0.6 9.2Z" fill="none" stroke="#1E1E1E" stroke-width="1.1"/></svg>
<svg class="a" style="left:1290px;top:260px;" width="5" height="7" viewBox="0 0 5 7"><path d="M0.6 1.9Q2.5 -0.2 4.4 1.9" stroke="#1E9AE0" stroke-width="1.1" fill="none"/><rect x="0" y="3" width="5" height="4" fill="#1E9AE0"/><rect x="2" y="4" width="1" height="2" fill="#F5F6FC"/></svg>
<svg class="a" style="left:1299px;top:259px;" width="12" height="8" viewBox="0 0 12 8"><path d="M5.4 1.3Q4.6 0.8 3.4 0.8Q0.9 0.8 0.9 3.5Q0.9 6.2 3.4 6.2Q4.6 6.2 5.4 5.6" stroke="#388A34" stroke-width="1.7" fill="none"/><path d="M7.5 0V5M9.6 0V5M6 1.5H11M6 3.5H11" stroke="#388A34" stroke-width="1.1"/></svg>
<div class="a t" style="left:1317px;top:255px;letter-spacing:0">UserAPI.cs</div>
<svg class="a" style="left:1241px;top:276px;" width="6" height="10" viewBox="0 0 6 10"><path d="M0.6 0.8L5.2 5L0.6 9.2Z" fill="none" stroke="#1E1E1E" stroke-width="1.1"/></svg>
<svg class="a" style="left:1261px;top:275px;" width="14" height="11" viewBox="0 0 14 11"><path d="M0.5 2.5H4.5L5.5 0.5H13.5V10.5H0.5Z" fill="#EBEDF8" stroke="#555" stroke-dasharray="1 1"/></svg>
<div class="a t" style="left:1281px;top:273px;letter-spacing:0">bin</div>
<svg class="a" style="left:1241px;top:296px;" width="7" height="7" viewBox="0 0 7 7"><path d="M6.5 0V6.5H0Z" fill="#1E1E1E"/></svg>
<svg class="a" style="left:1254px;top:296px;" width="5" height="7" viewBox="0 0 5 7"><path d="M0.6 1.9Q2.5 -0.2 4.4 1.9" stroke="#1E9AE0" stroke-width="1.1" fill="none"/><rect x="0" y="3" width="5" height="4" fill="#1E9AE0"/><rect x="2" y="4" width="1" height="2" fill="#F5F6FC"/></svg>
<svg class="a" style="left:1261px;top:292px;" width="15" height="12" viewBox="0 0 15 12"><path d="M0.5 3.5H4L6 1.5H14.5V11.5H0.5Z" fill="#EBEDF8" stroke="#DCB67A"/><path d="M0 6.5H9L11.5 11.5H1Z" fill="#DCB67A"/></svg>
<div class="a t" style="left:1281px;top:291px;letter-spacing:0">Code</div>
<svg class="a" style="left:1259px;top:312px;" width="6" height="10" viewBox="0 0 6 10"><path d="M0.6 0.8L5.2 5L0.6 9.2Z" fill="none" stroke="#1E1E1E" stroke-width="1.1"/></svg>
<svg class="a" style="left:1272px;top:314px;" width="5" height="7" viewBox="0 0 5 7"><path d="M0.6 1.9Q2.5 -0.2 4.4 1.9" stroke="#1E9AE0" stroke-width="1.1" fill="none"/><rect x="0" y="3" width="5" height="4" fill="#1E9AE0"/><rect x="2" y="4" width="1" height="2" fill="#F5F6FC"/></svg>
<svg class="a" style="left:1280px;top:311px;" width="14" height="11" viewBox="0 0 14 11"><path d="M0 1H5L6 0H14V11H0Z" fill="#DCB67A"/><rect x="6" y="1.5" width="7" height="1" fill="#F5F6FC"/></svg>
<div class="a t" style="left:1299px;top:309px;letter-spacing:0">Handlers</div>
<svg class="a" style="left:1272px;top:332px;" width="5" height="7" viewBox="0 0 5 7"><path d="M0.6 1.9Q2.5 -0.2 4.4 1.9" stroke="#1E9AE0" stroke-width="1.1" fill="none"/><rect x="0" y="3" width="5" height="4" fill="#1E9AE0"/><rect x="2" y="4" width="1" height="2" fill="#F5F6FC"/></svg>
<svg class="a" style="left:1280px;top:329px;" width="14" height="11" viewBox="0 0 14 11"><path d="M0 1H5L6 0H14V11H0Z" fill="#DCB67A"/><rect x="6" y="1.5" width="7" height="1" fill="#F5F6FC"/></svg>
<div class="a t" style="left:1299px;top:327px;letter-spacing:0">Hubs</div>
<svg class="a" style="left:1259px;top:348px;" width="6" height="10" viewBox="0 0 6 10"><path d="M0.6 0.8L5.2 5L0.6 9.2Z" fill="none" stroke="#1E1E1E" stroke-width="1.1"/></svg>
<svg class="a" style="left:1272px;top:350px;" width="5" height="7" viewBox="0 0 5 7"><path d="M0.6 1.9Q2.5 -0.2 4.4 1.9" stroke="#1E9AE0" stroke-width="1.1" fill="none"/><rect x="0" y="3" width="5" height="4" fill="#1E9AE0"/><rect x="2" y="4" width="1" height="2" fill="#F5F6FC"/></svg>
<svg class="a" style="left:1280px;top:347px;" width="14" height="11" viewBox="0 0 14 11"><path d="M0 1H5L6 0H14V11H0Z" fill="#DCB67A"/><rect x="6" y="1.5" width="7" height="1" fill="#F5F6FC"/></svg>
<div class="a t" style="left:1299px;top:345px;letter-spacing:0">Processing</div>
<svg class="a" style="left:1259px;top:366px;" width="6" height="10" viewBox="0 0 6 10"><path d="M0.6 0.8L5.2 5L0.6 9.2Z" fill="none" stroke="#1E1E1E" stroke-width="1.1"/></svg>
<svg class="a" style="left:1279px;top:365px;" width="14" height="11" viewBox="0 0 14 11"><path d="M0.5 2.5H4.5L5.5 0.5H13.5V10.5H0.5Z" fill="#EBEDF8" stroke="#555" stroke-dasharray="1 1"/></svg>
<div class="a t" style="left:1299px;top:363px;letter-spacing:0">Stacks</div>
<svg class="a" style="left:1259px;top:384px;" width="6" height="10" viewBox="0 0 6 10"><path d="M0.6 0.8L5.2 5L0.6 9.2Z" fill="none" stroke="#1E1E1E" stroke-width="1.1"/></svg>
<svg class="a" style="left:1272px;top:386px;" width="5" height="7" viewBox="0 0 5 7"><path d="M0.6 1.9Q2.5 -0.2 4.4 1.9" stroke="#1E9AE0" stroke-width="1.1" fill="none"/><rect x="0" y="3" width="5" height="4" fill="#1E9AE0"/><rect x="2" y="4" width="1" height="2" fill="#F5F6FC"/></svg>
<svg class="a" style="left:1280px;top:383px;" width="14" height="11" viewBox="0 0 14 11"><path d="M0 1H5L6 0H14V11H0Z" fill="#DCB67A"/><rect x="6" y="1.5" width="7" height="1" fill="#F5F6FC"/></svg>
<div class="a t" style="left:1299px;top:381px;letter-spacing:0">Stub</div>
<svg class="a" style="left:1259px;top:402px;" width="6" height="10" viewBox="0 0 6 10"><path d="M0.6 0.8L5.2 5L0.6 9.2Z" fill="none" stroke="#1E1E1E" stroke-width="1.1"/></svg>
<svg class="a" style="left:1272px;top:404px;" width="5" height="7" viewBox="0 0 5 7"><path d="M0.6 1.9Q2.5 -0.2 4.4 1.9" stroke="#1E9AE0" stroke-width="1.1" fill="none"/><rect x="0" y="3" width="5" height="4" fill="#1E9AE0"/><rect x="2" y="4" width="1" height="2" fill="#F5F6FC"/></svg>
<svg class="a" style="left:1281px;top:403px;" width="12" height="8" viewBox="0 0 12 8"><path d="M5.4 1.3Q4.6 0.8 3.4 0.8Q0.9 0.8 0.9 3.5Q0.9 6.2 3.4 6.2Q4.6 6.2 5.4 5.6" stroke="#388A34" stroke-width="1.7" fill="none"/><path d="M7.5 0V5M9.6 0V5M6 1.5H11M6 3.5H11" stroke="#388A34" stroke-width="1.1"/></svg>
<div class="a t" style="left:1299px;top:399px;letter-spacing:0">Extensions.cs</div>
<svg class="a" style="left:1241px;top:422px;" width="7" height="7" viewBox="0 0 7 7"><path d="M6.5 0V6.5H0Z" fill="#1E1E1E"/></svg>
<svg class="a" style="left:1254px;top:422px;" width="5" height="7" viewBox="0 0 5 7"><path d="M0.6 1.9Q2.5 -0.2 4.4 1.9" stroke="#1E9AE0" stroke-width="1.1" fill="none"/><rect x="0" y="3" width="5" height="4" fill="#1E9AE0"/><rect x="2" y="4" width="1" height="2" fill="#F5F6FC"/></svg>
<svg class="a" style="left:1261px;top:418px;" width="15" height="12" viewBox="0 0 15 12"><path d="M0.5 3.5H4L6 1.5H14.5V11.5H0.5Z" fill="#EBEDF8" stroke="#DCB67A"/><path d="M0 6.5H9L11.5 11.5H1Z" fill="#DCB67A"/></svg>
<div class="a t" style="left:1281px;top:417px;letter-spacing:0">Controllers</div>
<svg class="a" style="left:1259px;top:438px;" width="6" height="10" viewBox="0 0 6 10"><path d="M0.6 0.8L5.2 5L0.6 9.2Z" fill="none" stroke="#1E1E1E" stroke-width="1.1"/></svg>
<svg class="a" style="left:1272px;top:440px;" width="5" height="7" viewBox="0 0 5 7"><path d="M0.6 1.9Q2.5 -0.2 4.4 1.9" stroke="#1E9AE0" stroke-width="1.1" fill="none"/><rect x="0" y="3" width="5" height="4" fill="#1E9AE0"/><rect x="2" y="4" width="1" height="2" fill="#F5F6FC"/></svg>
<svg class="a" style="left:1281px;top:439px;" width="12" height="8" viewBox="0 0 12 8"><path d="M5.4 1.3Q4.6 0.8 3.4 0.8Q0.9 0.8 0.9 3.5Q0.9 6.2 3.4 6.2Q4.6 6.2 5.4 5.6" stroke="#388A34" stroke-width="1.7" fill="none"/><path d="M7.5 0V5M9.6 0V5M6 1.5H11M6 3.5H11" stroke="#388A34" stroke-width="1.1"/></svg>
<div class="a t" style="left:1299px;top:435px;letter-spacing:0">HomeController.cs</div>
<svg class="a" style="left:1259px;top:456px;" width="6" height="10" viewBox="0 0 6 10"><path d="M0.6 0.8L5.2 5L0.6 9.2Z" fill="none" stroke="#1E1E1E" stroke-width="1.1"/></svg>
<svg class="a" style="left:1272px;top:458px;" width="5" height="7" viewBox="0 0 5 7"><path d="M0.6 1.9Q2.5 -0.2 4.4 1.9" stroke="#1E9AE0" stroke-width="1.1" fill="none"/><rect x="0" y="3" width="5" height="4" fill="#1E9AE0"/><rect x="2" y="4" width="1" height="2" fill="#F5F6FC"/></svg>
<svg class="a" style="left:1281px;top:457px;" width="12" height="8" viewBox="0 0 12 8"><path d="M5.4 1.3Q4.6 0.8 3.4 0.8Q0.9 0.8 0.9 3.5Q0.9 6.2 3.4 6.2Q4.6 6.2 5.4 5.6" stroke="#388A34" stroke-width="1.7" fill="none"/><path d="M7.5 0V5M9.6 0V5M6 1.5H11M6 3.5H11" stroke="#388A34" stroke-width="1.1"/></svg>
<div class="a t" style="left:1299px;top:453px;letter-spacing:0">HostingController.cs</div>
<svg class="a" style="left:1259px;top:474px;" width="6" height="10" viewBox="0 0 6 10"><path d="M0.6 0.8L5.2 5L0.6 9.2Z" fill="none" stroke="#1E1E1E" stroke-width="1.1"/></svg>
<svg class="a" style="left:1272px;top:476px;" width="5" height="7" viewBox="0 0 5 7"><path d="M0.6 1.9Q2.5 -0.2 4.4 1.9" stroke="#1E9AE0" stroke-width="1.1" fill="none"/><rect x="0" y="3" width="5" height="4" fill="#1E9AE0"/><rect x="2" y="4" width="1" height="2" fill="#F5F6FC"/></svg>
<svg class="a" style="left:1281px;top:475px;" width="12" height="8" viewBox="0 0 12 8"><path d="M5.4 1.3Q4.6 0.8 3.4 0.8Q0.9 0.8 0.9 3.5Q0.9 6.2 3.4 6.2Q4.6 6.2 5.4 5.6" stroke="#388A34" stroke-width="1.7" fill="none"/><path d="M7.5 0V5M9.6 0V5M6 1.5H11M6 3.5H11" stroke="#388A34" stroke-width="1.1"/></svg>
<div class="a t" style="left:1299px;top:471px;letter-spacing:0">MNPools.cs</div>
<svg class="a" style="left:1259px;top:492px;" width="6" height="10" viewBox="0 0 6 10"><path d="M0.6 0.8L5.2 5L0.6 9.2Z" fill="none" stroke="#1E1E1E" stroke-width="1.1"/></svg>
<svg class="a" style="left:1272px;top:494px;" width="5" height="7" viewBox="0 0 5 7"><path d="M0.6 1.9Q2.5 -0.2 4.4 1.9" stroke="#1E9AE0" stroke-width="1.1" fill="none"/><rect x="0" y="3" width="5" height="4" fill="#1E9AE0"/><rect x="2" y="4" width="1" height="2" fill="#F5F6FC"/></svg>
<svg class="a" style="left:1281px;top:493px;" width="12" height="8" viewBox="0 0 12 8"><path d="M5.4 1.3Q4.6 0.8 3.4 0.8Q0.9 0.8 0.9 3.5Q0.9 6.2 3.4 6.2Q4.6 6.2 5.4 5.6" stroke="#388A34" stroke-width="1.7" fill="none"/><path d="M7.5 0V5M9.6 0V5M6 1.5H11M6 3.5H11" stroke="#388A34" stroke-width="1.1"/></svg>
<div class="a t" style="left:1299px;top:489px;letter-spacing:0">TestController.cs</div>
<svg class="a" style="left:1241px;top:512px;" width="7" height="7" viewBox="0 0 7 7"><path d="M6.5 0V6.5H0Z" fill="#1E1E1E"/></svg>
<svg class="a" style="left:1254px;top:512px;" width="5" height="7" viewBox="0 0 5 7"><path d="M0.6 1.9Q2.5 -0.2 4.4 1.9" stroke="#1E9AE0" stroke-width="1.1" fill="none"/><rect x="0" y="3" width="5" height="4" fill="#1E9AE0"/><rect x="2" y="4" width="1" height="2" fill="#F5F6FC"/></svg>
<svg class="a" style="left:1261px;top:508px;" width="15" height="12" viewBox="0 0 15 12"><path d="M0.5 3.5H4L6 1.5H14.5V11.5H0.5Z" fill="#EBEDF8" stroke="#DCB67A"/><path d="M0 6.5H9L11.5 11.5H1Z" fill="#DCB67A"/></svg>
<div class="a t" style="left:1281px;top:507px;letter-spacing:0">Migrations</div>
<svg class="a" style="left:1259px;top:530px;" width="7" height="7" viewBox="0 0 7 7"><path d="M6.5 0V6.5H0Z" fill="#1E1E1E"/></svg>
<svg class="a" style="left:1272px;top:530px;" width="5" height="7" viewBox="0 0 5 7"><path d="M0.6 1.9Q2.5 -0.2 4.4 1.9" stroke="#1E9AE0" stroke-width="1.1" fill="none"/><rect x="0" y="3" width="5" height="4" fill="#1E9AE0"/><rect x="2" y="4" width="1" height="2" fill="#F5F6FC"/></svg>
<svg class="a" style="left:1279px;top:526px;" width="15" height="12" viewBox="0 0 15 12"><path d="M0.5 3.5H4L6 1.5H14.5V11.5H0.5Z" fill="#EBEDF8" stroke="#DCB67A"/><path d="M0 6.5H9L11.5 11.5H1Z" fill="#DCB67A"/></svg>
<div class="a t" style="left:1299px;top:525px;letter-spacing:0">NodemastersSeedData</div>
<svg class="a" style="left:1277px;top:546px;" width="6" height="10" viewBox="0 0 6 10"><path d="M0.6 0.8L5.2 5L0.6 9.2Z" fill="none" stroke="#1E1E1E" stroke-width="1.1"/></svg>
<svg class="a" style="left:1290px;top:548px;" width="5" height="7" viewBox="0 0 5 7"><path d="M0.6 1.9Q2.5 -0.2 4.4 1.9" stroke="#1E9AE0" stroke-width="1.1" fill="none"/><rect x="0" y="3" width="5" height="4" fill="#1E9AE0"/><rect x="2" y="4" width="1" height="2" fill="#F5F6FC"/></svg>
<svg class="a" style="left:1299px;top:547px;" width="12" height="8" viewBox="0 0 12 8"><path d="M5.4 1.3Q4.6 0.8 3.4 0.8Q0.9 0.8 0.9 3.5Q0.9 6.2 3.4 6.2Q4.6 6.2 5.4 5.6" stroke="#388A34" stroke-width="1.7" fill="none"/><path d="M7.5 0V5M9.6 0V5M6 1.5H11M6 3.5H11" stroke="#388A34" stroke-width="1.1"/></svg>
<div class="a t" style="left:1317px;top:543px;letter-spacing:0">IPSeeding.cs</div>
<svg class="a" style="left:1277px;top:564px;" width="6" height="10" viewBox="0 0 6 10"><path d="M0.6 0.8L5.2 5L0.6 9.2Z" fill="none" stroke="#1E1E1E" stroke-width="1.1"/></svg>
<svg class="a" style="left:1290px;top:566px;" width="5" height="7" viewBox="0 0 5 7"><path d="M0.6 1.9Q2.5 -0.2 4.4 1.9" stroke="#1E9AE0" stroke-width="1.1" fill="none"/><rect x="0" y="3" width="5" height="4" fill="#1E9AE0"/><rect x="2" y="4" width="1" height="2" fill="#F5F6FC"/></svg>
<svg class="a" style="left:1299px;top:565px;" width="12" height="8" viewBox="0 0 12 8"><path d="M5.4 1.3Q4.6 0.8 3.4 0.8Q0.9 0.8 0.9 3.5Q0.9 6.2 3.4 6.2Q4.6 6.2 5.4 5.6" stroke="#388A34" stroke-width="1.7" fill="none"/><path d="M7.5 0V5M9.6 0V5M6 1.5H11M6 3.5H11" stroke="#388A34" stroke-width="1.1"/></svg>
<div class="a t" style="left:1317px;top:561px;letter-spacing:0">MasternodeSeedTemplate.cs</div>
<svg class="a" style="left:1277px;top:582px;" width="6" height="10" viewBox="0 0 6 10"><path d="M0.6 0.8L5.2 5L0.6 9.2Z" fill="none" stroke="#1E1E1E" stroke-width="1.1"/></svg>
<svg class="a" style="left:1290px;top:584px;" width="5" height="7" viewBox="0 0 5 7"><path d="M0.6 1.9Q2.5 -0.2 4.4 1.9" stroke="#1E9AE0" stroke-width="1.1" fill="none"/><rect x="0" y="3" width="5" height="4" fill="#1E9AE0"/><rect x="2" y="4" width="1" height="2" fill="#F5F6FC"/></svg>
<svg class="a" style="left:1299px;top:583px;" width="12" height="8" viewBox="0 0 12 8"><path d="M5.4 1.3Q4.6 0.8 3.4 0.8Q0.9 0.8 0.9 3.5Q0.9 6.2 3.4 6.2Q4.6 6.2 5.4 5.6" stroke="#388A34" stroke-width="1.7" fill="none"/><path d="M7.5 0V5M9.6 0V5M6 1.5H11M6 3.5H11" stroke="#388A34" stroke-width="1.1"/></svg>
<div class="a t" style="left:1317px;top:579px;letter-spacing:0">OperatingSystemSeed.cs</div>
<svg class="a" style="left:1277px;top:600px;" width="6" height="10" viewBox="0 0 6 10"><path d="M0.6 0.8L5.2 5L0.6 9.2Z" fill="none" stroke="#1E1E1E" stroke-width="1.1"/></svg>
<svg class="a" style="left:1290px;top:602px;" width="5" height="7" viewBox="0 0 5 7"><path d="M0.6 1.9Q2.5 -0.2 4.4 1.9" stroke="#1E9AE0" stroke-width="1.1" fill="none"/><rect x="0" y="3" width="5" height="4" fill="#1E9AE0"/><rect x="2" y="4" width="1" height="2" fill="#F5F6FC"/></svg>
<svg class="a" style="left:1299px;top:601px;" width="12" height="8" viewBox="0 0 12 8"><path d="M5.4 1.3Q4.6 0.8 3.4 0.8Q0.9 0.8 0.9 3.5Q0.9 6.2 3.4 6.2Q4.6 6.2 5.4 5.6" stroke="#388A34" stroke-width="1.7" fill="none"/><path d="M7.5 0V5M9.6 0V5M6 1.5H11M6 3.5H11" stroke="#388A34" stroke-width="1.1"/></svg>
<div class="a t" style="left:1317px;top:597px;letter-spacing:0">ServerSeed.cs</div>
<svg class="a" style="left:1277px;top:618px;" width="6" height="10" viewBox="0 0 6 10"><path d="M0.6 0.8L5.2 5L0.6 9.2Z" fill="none" stroke="#1E1E1E" stroke-width="1.1"/></svg>
<svg class="a" style="left:1290px;top:620px;" width="5" height="7" viewBox="0 0 5 7"><path d="M0.6 1.9Q2.5 -0.2 4.4 1.9" stroke="#1E9AE0" stroke-width="1.1" fill="none"/><rect x="0" y="3" width="5" height="4" fill="#1E9AE0"/><rect x="2" y="4" width="1" height="2" fill="#F5F6FC"/></svg>
<svg class="a" style="left:1299px;top:619px;" width="12" height="8" viewBox="0 0 12 8"><path d="M5.4 1.3Q4.6 0.8 3.4 0.8Q0.9 0.8 0.9 3.5Q0.9 6.2 3.4 6.2Q4.6 6.2 5.4 5.6" stroke="#388A34" stroke-width="1.7" fill="none"/><path d="M7.5 0V5M9.6 0V5M6 1.5H11M6 3.5H11" stroke="#388A34" stroke-width="1.1"/></svg>
<div class="a t" style="left:1317px;top:615px;letter-spacing:0">UsersSeed.cs</div>
<svg class="a" style="left:1277px;top:636px;" width="6" height="10" viewBox="0 0 6 10"><path d="M0.6 0.8L5.2 5L0.6 9.2Z" fill="none" stroke="#1E1E1E" stroke-width="1.1"/></svg>
<svg class="a" style="left:1290px;top:638px;" width="5" height="7" viewBox="0 0 5 7"><path d="M0.6 1.9Q2.5 -0.2 4.4 1.9" stroke="#1E9AE0" stroke-width="1.1" fill="none"/><rect x="0" y="3" width="5" height="4" fill="#1E9AE0"/><rect x="2" y="4" width="1" height="2" fill="#F5F6FC"/></svg>
<svg class="a" style="left:1299px;top:637px;" width="12" height="8" viewBox="0 0 12 8"><path d="M5.4 1.3Q4.6 0.8 3.4 0.8Q0.9 0.8 0.9 3.5Q0.9 6.2 3.4 6.2Q4.6 6.2 5.4 5.6" stroke="#388A34" stroke-width="1.7" fill="none"/><path d="M7.5 0V5M9.6 0V5M6 1.5H11M6 3.5H11" stroke="#388A34" stroke-width="1.1"/></svg>
<div class="a t" style="left:1317px;top:633px;letter-spacing:0">WatchOnlySeedData.cs</div>
<svg class="a" style="left:1259px;top:656px;" width="7" height="7" viewBox="0 0 7 7"><path d="M6.5 0V6.5H0Z" fill="#1E1E1E"/></svg>
<svg class="a" style="left:1272px;top:656px;" width="5" height="7" viewBox="0 0 5 7"><path d="M0.6 1.9Q2.5 -0.2 4.4 1.9" stroke="#1E9AE0" stroke-width="1.1" fill="none"/><rect x="0" y="3" width="5" height="4" fill="#1E9AE0"/><rect x="2" y="4" width="1" height="2" fill="#F5F6FC"/></svg>
<svg class="a" style="left:1281px;top:655px;" width="12" height="8" viewBox="0 0 12 8"><path d="M5.4 1.3Q4.6 0.8 3.4 0.8Q0.9 0.8 0.9 3.5Q0.9 6.2 3.4 6.2Q4.6 6.2 5.4 5.6" stroke="#388A34" stroke-width="1.7" fill="none"/><path d="M7.5 0V5M9.6 0V5M6 1.5H11M6 3.5H11" stroke="#388A34" stroke-width="1.1"/></svg>
<div class="a t" style="left:1299px;top:651px;letter-spacing:0">20200508121022_init.cs</div>
<svg class="a" style="left:1277px;top:672px;" width="6" height="10" viewBox="0 0 6 10"><path d="M0.6 0.8L5.2 5L0.6 9.2Z" fill="none" stroke="#1E1E1E" stroke-width="1.1"/></svg>
<svg class="a" style="left:1290px;top:674px;" width="5" height="7" viewBox="0 0 5 7"><path d="M0.6 1.9Q2.5 -0.2 4.4 1.9" stroke="#1E9AE0" stroke-width="1.1" fill="none"/><rect x="0" y="3" width="5" height="4" fill="#1E9AE0"/><rect x="2" y="4" width="1" height="2" fill="#F5F6FC"/></svg>
<svg class="a" style="left:1299px;top:673px;" width="12" height="8" viewBox="0 0 12 8"><path d="M5.4 1.3Q4.6 0.8 3.4 0.8Q0.9 0.8 0.9 3.5Q0.9 6.2 3.4 6.2Q4.6 6.2 5.4 5.6" stroke="#388A34" stroke-width="1.7" fill="none"/><path d="M7.5 0V5M9.6 0V5M6 1.5H11M6 3.5H11" stroke="#388A34" stroke-width="1.1"/></svg>
<div class="a t" style="left:1317px;top:669px;letter-spacing:0">20200508121022_init.Designer.cs</div>
<svg class="a" style="left:1277px;top:690px;" width="6" height="10" viewBox="0 0 6 10"><path d="M0.6 0.8L5.2 5L0.6 9.2Z" fill="none" stroke="#1E1E1E" stroke-width="1.1"/></svg>
<svg class="a" style="left:1296px;top:687px;" width="15" height="14" viewBox="0 0 15 14"><path d="M1 5L5 1L9 5L5 9Z" fill="#D88A20"/><path d="M8 7H11V12M11 9L14 9M11 12.5H14" stroke="#D88A20" stroke-width="1.7" fill="none"/></svg>
<div class="a t" style="left:1317px;top:687px;letter-spacing:0">init</div>
<svg class="a" style="left:1259px;top:708px;" width="6" height="10" viewBox="0 0 6 10"><path d="M0.6 0.8L5.2 5L0.6 9.2Z" fill="none" stroke="#1E1E1E" stroke-width="1.1"/></svg>
<svg class="a" style="left:1272px;top:710px;" width="5" height="7" viewBox="0 0 5 7"><path d="M0.6 1.9Q2.5 -0.2 4.4 1.9" stroke="#1E9AE0" stroke-width="1.1" fill="none"/><rect x="0" y="3" width="5" height="4" fill="#1E9AE0"/><rect x="2" y="4" width="1" height="2" fill="#F5F6FC"/></svg>
<svg class="a" style="left:1281px;top:709px;" width="12" height="8" viewBox="0 0 12 8"><path d="M5.4 1.3Q4.6 0.8 3.4 0.8Q0.9 0.8 0.9 3.5Q0.9 6.2 3.4 6.2Q4.6 6.2 5.4 5.6" stroke="#388A34" stroke-width="1.7" fill="none"/><path d="M7.5 0V5M9.6 0V5M6 1.5H11M6 3.5H11" stroke="#388A34" stroke-width="1.1"/></svg>
<div class="a t" style="left:1299px;top:705px;letter-spacing:0">ApplicationDbContextModelSnapshot.cs</div>
<svg class="a" style="left:1259px;top:726px;" width="6" height="10" viewBox="0 0 6 10"><path d="M0.6 0.8L5.2 5L0.6 9.2Z" fill="none" stroke="#1E1E1E" stroke-width="1.1"/></svg>
<svg class="a" style="left:1272px;top:728px;" width="5" height="7" viewBox="0 0 5 7"><path d="M0.6 1.9Q2.5 -0.2 4.4 1.9" stroke="#1E9AE0" stroke-width="1.1" fill="none"/><rect x="0" y="3" width="5" height="4" fill="#1E9AE0"/><rect x="2" y="4" width="1" height="2" fill="#F5F6FC"/></svg>
<svg class="a" style="left:1281px;top:727px;" width="12" height="8" viewBox="0 0 12 8"><path d="M5.4 1.3Q4.6 0.8 3.4 0.8Q0.9 0.8 0.9 3.5Q0.9 6.2 3.4 6.2Q4.6 6.2 5.4 5.6" stroke="#388A34" stroke-width="1.7" fill="none"/><path d="M7.5 0V5M9.6 0V5M6 1.5H11M6 3.5H11" stroke="#388A34" stroke-width="1.1"/></svg>
<div class="a t" style="left:1299px;top:723px;letter-spacing:0">UserInit.cs</div>
<svg class="a" style="left:1241px;top:744px;" width="6" height="10" viewBox="0 0 6 10"><path d="M0.6 0.8L5.2 5L0.6 9.2Z" fill="none" stroke="#1E1E1E" stroke-width="1.1"/></svg>
<svg class="a" style="left:1254px;top:746px;" width="5" height="7" viewBox="0 0 5 7"><path d="M0.6 1.9Q2.5 -0.2 4.4 1.9" stroke="#1E9AE0" stroke-width="1.1" fill="none"/><rect x="0" y="3" width="5" height="4" fill="#1E9AE0"/><rect x="2" y="4" width="1" height="2" fill="#F5F6FC"/></svg>
<svg class="a" style="left:1262px;top:743px;" width="14" height="11" viewBox="0 0 14 11"><path d="M0 1H5L6 0H14V11H0Z" fill="#DCB67A"/><rect x="6" y="1.5" width="7" height="1" fill="#F5F6FC"/></svg>
<div class="a t" style="left:1281px;top:741px;letter-spacing:0">Models</div>
<svg class="a" style="left:1241px;top:762px;" width="6" height="10" viewBox="0 0 6 10"><path d="M0.6 0.8L5.2 5L0.6 9.2Z" fill="none" stroke="#1E1E1E" stroke-width="1.1"/></svg>
<svg class="a" style="left:1261px;top:761px;" width="14" height="11" viewBox="0 0 14 11"><path d="M0.5 2.5H4.5L5.5 0.5H13.5V10.5H0.5Z" fill="#EBEDF8" stroke="#555" stroke-dasharray="1 1"/></svg>
<div class="a t" style="left:1281px;top:759px;letter-spacing:0">obj</div>
<svg class="a" style="left:1241px;top:782px;" width="7" height="7" viewBox="0 0 7 7"><path d="M6.5 0V6.5H0Z" fill="#1E1E1E"/></svg>
<svg class="a" style="left:1254px;top:782px;" width="5" height="7" viewBox="0 0 5 7"><path d="M0.6 1.9Q2.5 -0.2 4.4 1.9" stroke="#1E9AE0" stroke-width="1.1" fill="none"/><rect x="0" y="3" width="5" height="4" fill="#1E9AE0"/><rect x="2" y="4" width="1" height="2" fill="#F5F6FC"/></svg>
<svg class="a" style="left:1261px;top:778px;" width="15" height="13" viewBox="0 0 15 13"><path d="M5.5 1.5H13.5V11.5Q13.5 12.5 12.5 12.5H8.5M5.5 1.5V10M13.5 1.5V4" stroke="#333" stroke-width="1.3" fill="none"/><circle cx="3.5" cy="10" r="2.5" fill="#F5F6FC" stroke="#333" stroke-width="1.2"/></svg>
<div class="a t" style="left:1281px;top:777px;letter-spacing:0">appsettings.json</div>
<svg class="a" style="left:1272px;top:800px;" width="5" height="7" viewBox="0 0 5 7"><path d="M0.6 1.9Q2.5 -0.2 4.4 1.9" stroke="#1E9AE0" stroke-width="1.1" fill="none"/><rect x="0" y="3" width="5" height="4" fill="#1E9AE0"/><rect x="2" y="4" width="1" height="2" fill="#F5F6FC"/></svg>
<svg class="a" style="left:1279px;top:796px;" width="15" height="13" viewBox="0 0 15 13"><path d="M5.5 1.5H13.5V11.5Q13.5 12.5 12.5 12.5H8.5M5.5 1.5V10M13.5 1.5V4" stroke="#333" stroke-width="1.3" fill="none"/><circle cx="3.5" cy="10" r="2.5" fill="#F5F6FC" stroke="#333" stroke-width="1.2"/></svg>
<div class="a t" style="left:1299px;top:795px;letter-spacing:0">appsettings.Development.json</div>
<svg class="a" style="left:1241px;top:816px;" width="6" height="10" viewBox="0 0 6 10"><path d="M0.6 0.8L5.2 5L0.6 9.2Z" fill="none" stroke="#1E1E1E" stroke-width="1.1"/></svg>
<svg class="a" style="left:1254px;top:818px;" width="5" height="7" viewBox="0 0 5 7"><path d="M0.6 1.9Q2.5 -0.2 4.4 1.9" stroke="#1E9AE0" stroke-width="1.1" fill="none"/><rect x="0" y="3" width="5" height="4" fill="#1E9AE0"/><rect x="2" y="4" width="1" height="2" fill="#F5F6FC"/></svg>
<svg class="a" style="left:1263px;top:817px;" width="12" height="8" viewBox="0 0 12 8"><path d="M5.4 1.3Q4.6 0.8 3.4 0.8Q0.9 0.8 0.9 3.5Q0.9 6.2 3.4 6.2Q4.6 6.2 5.4 5.6" stroke="#388A34" stroke-width="1.7" fill="none"/><path d="M7.5 0V5M9.6 0V5M6 1.5H11M6 3.5H11" stroke="#388A34" stroke-width="1.1"/></svg>
<div class="a t" style="left:1281px;top:813px;letter-spacing:0">GetClaimUserId.cs</div>
<svg class="a" style="left:1241px;top:834px;" width="6" height="10" viewBox="0 0 6 10"><path d="M0.6 0.8L5.2 5L0.6 9.2Z" fill="none" stroke="#1E1E1E" stroke-width="1.1"/></svg>
<svg class="a" style="left:1254px;top:836px;" width="5" height="7" viewBox="0 0 5 7"><path d="M0.6 1.9Q2.5 -0.2 4.4 1.9" stroke="#1E9AE0" stroke-width="1.1" fill="none"/><rect x="0" y="3" width="5" height="4" fill="#1E9AE0"/><rect x="2" y="4" width="1" height="2" fill="#F5F6FC"/></svg>
<svg class="a" style="left:1263px;top:835px;" width="12" height="8" viewBox="0 0 12 8"><path d="M5.4 1.3Q4.6 0.8 3.4 0.8Q0.9 0.8 0.9 3.5Q0.9 6.2 3.4 6.2Q4.6 6.2 5.4 5.6" stroke="#388A34" stroke-width="1.7" fill="none"/><path d="M7.5 0V5M9.6 0V5M6 1.5H11M6 3.5H11" stroke="#388A34" stroke-width="1.1"/></svg>
<div class="a t" style="left:1281px;top:831px;letter-spacing:0">Program.cs</div>
<svg class="a" style="left:1241px;top:852px;" width="6" height="10" viewBox="0 0 6 10"><path d="M0.6 0.8L5.2 5L0.6 9.2Z" fill="none" stroke="#1E1E1E" stroke-width="1.1"/></svg>
<svg class="a" style="left:1253px;top:854px;" width="7" height="7" viewBox="0 0 7 7"><path d="M0.5 4L2.5 6.5L6.5 0.5" stroke="#E02020" stroke-width="1.5" fill="none"/></svg>
<svg class="a" style="left:1263px;top:853px;" width="12" height="8" viewBox="0 0 12 8"><path d="M5.4 1.3Q4.6 0.8 3.4 0.8Q0.9 0.8 0.9 3.5Q0.9 6.2 3.4 6.2Q4.6 6.2 5.4 5.6" stroke="#388A34" stroke-width="1.7" fill="none"/><path d="M7.5 0V5M9.6 0V5M6 1.5H11M6 3.5H11" stroke="#388A34" stroke-width="1.1"/></svg>
<div class="a t" style="left:1281px;top:849px;letter-spacing:0">Startup.cs</div>
<svg class="a" style="left:1241px;top:870px;" width="6" height="10" viewBox="0 0 6 10"><path d="M0.6 0.8L5.2 5L0.6 9.2Z" fill="none" stroke="#1E1E1E" stroke-width="1.1"/></svg>
<svg class="a" style="left:1254px;top:872px;" width="5" height="7" viewBox="0 0 5 7"><path d="M0.6 1.9Q2.5 -0.2 4.4 1.9" stroke="#1E9AE0" stroke-width="1.1" fill="none"/><rect x="0" y="3" width="5" height="4" fill="#1E9AE0"/><rect x="2" y="4" width="1" height="2" fill="#F5F6FC"/></svg>
<svg class="a" style="left:1263px;top:871px;" width="12" height="8" viewBox="0 0 12 8"><path d="M5.4 1.3Q4.6 0.8 3.4 0.8Q0.9 0.8 0.9 3.5Q0.9 6.2 3.4 6.2Q4.6 6.2 5.4 5.6" stroke="#388A34" stroke-width="1.7" fill="none"/><path d="M7.5 0V5M9.6 0V5M6 1.5H11M6 3.5H11" stroke="#388A34" stroke-width="1.1"/></svg>
<div class="a t" style="left:1281px;top:867px;letter-spacing:0">Test.cs</div>
<div class="a" style="left:1212px;top:899px;width:100px;height:20px;background:#F5F6FC;"></div>
<div class="a t" style="left:1216px;top:901px;">Solution Explorer</div>
<div class="a" style="left:1314px;top:899px;width:65px;height:20px;background:#3F5189;"></div>
<div class="a t" style="left:1319px;top:901px;color:#fff;-webkit-text-stroke:0.05px #fff">Class View</div>
<div class="a" style="left:1381px;top:899px;width:84px;height:20px;background:#3F5189;"></div>
<div class="a t" style="left:1386px;top:901px;color:#fff;-webkit-text-stroke:0.05px #fff">Team Explorer</div>
<div class="a" style="left:1467px;top:899px;width:26px;height:20px;background:#3F5189;"></div>
<div class="a t" style="left:1472px;top:901px;color:#fff;-webkit-text-stroke:0.05px #fff">Git</div>
<div class="a" style="left:1212px;top:927px;width:381px;height:21px;background:#40568D;"></div>
<div class="a t" style="left:1216px;top:930px;color:#fff;-webkit-text-stroke:0.05px #fff">Properties</div>
<svg class="a" style="left:1545px;top:935px;" width="8" height="4" viewBox="0 0 8 4"><path d="M0 0H8L4 4Z" fill="#C2CAE8"/></svg>
<svg class="a" style="left:1562px;top:932px;" width="8" height="12" viewBox="0 0 8 12"><path d="M2.5 0.5H5.5V6.5H2.5Z" fill="none" stroke="#C2CAE8" stroke-width="1.6"/><path d="M0.5 7H7.5M4 7V11.5" stroke="#C2CAE8" stroke-width="1.3"/></svg>
<svg class="a" style="left:1577px;top:933px;" width="10" height="8" viewBox="0 0 10 8"><path d="M0.5 0.3L9.5 7.7M9.5 0.3L0.5 7.7" stroke="#C2CAE8" stroke-width="1.3"/></svg>
<div class="a" style="left:1212px;top:948px;width:381px;height:182px;background:#F5F6FC;"></div>
<div class="a" style="left:1213px;top:948px;width:379px;height:25px;background:#FCFCFD;"></div>
<svg class="a" style="left:1582px;top:959px;" width="7" height="4" viewBox="0 0 7 4"><path d="M0 0H7L3.5 4Z" fill="#1E1E1E"/></svg>
<div class="a" style="left:1213px;top:973px;width:379px;height:25px;background:#CCD5F0;"></div>
<svg class="a" style="left:1218px;top:977px;" width="16" height="16" viewBox="0 0 16 16"><rect x="1" y="1" width="5" height="5" fill="#1E1E1E"/><rect x="1" y="10" width="5" height="5" fill="#1E1E1E"/><path d="M2.5 3.5H4.5M3.5 2.5V4.5M2.5 12.5H4.5M3.5 11.5V13.5" stroke="#fff"/><path d="M7 1.5H12M7 3.5H12M7 5.5H12M7 7.5H12M7 9.5H12M7 11.5H12M7 14.5H12M13 3.5H15M13 5.5H15M13 7.5H15M13 9.5H15M13 14.5H15" stroke="#1E1E1E"/></svg>
<div class="a" style="left:1238px;top:974px;width:23px;height:22px;background:#FFEFD2;border:1px solid #E3B968"></div>
<svg class="a" style="left:1241px;top:977px;" width="16" height="16" viewBox="0 0 16 16"><rect x="1" y="1" width="7" height="7" fill="#2A2A2A"/><path d="M2.5 7L4.5 2L6.5 7M3.2 5.3H5.8" stroke="#fff" stroke-width="1" fill="none"/><path d="M2 10H7L2 15H7" stroke="#2A2A2A" stroke-width="1.5" fill="none"/><path d="M12 4V12M9.5 9.5L12 13L14.5 9.5" stroke="#0A3CA8" stroke-width="2" fill="none"/></svg>
<div class="a" style="left:1264px;top:976px;width:1px;height:20px;background:#A6B0D0;"></div>
<svg class="a" style="left:1270px;top:977px;" width="16" height="16" viewBox="0 0 16 16"><path d="M1.5 14.5L7.5 8.5" stroke="#8A8F9C" stroke-width="3" stroke-linecap="round"/><circle cx="10.5" cy="5.5" r="4.5" fill="#8A8F9C"/><path d="M10 3.5L12.5 1L15 3.5L12.5 6Z" fill="#CCD5F0"/></svg>
<div class="a" style="left:1213px;top:1067px;width:378px;height:1px;background:#E4E6EE;"></div>
<div class="a t" style="left:1295px;top:1061px;font-size:20.1px;line-height:22px;color:#A3A6AD;letter-spacing:0;-webkit-text-stroke:0">Activate Windows</div>
<div class="a t" style="left:1295px;top:1086px;font-size:15.2px;line-height:17px;color:#A8ABB2;letter-spacing:0;-webkit-text-stroke:0">Go to Settings to activate Windows.</div>
<div class="a" style="left:34px;top:552px;width:1143px;height:420px;box-shadow:0 2px 8px rgba(30,40,90,0.28)"></div>
<div class="a" style="left:34px;top:552px;width:1143px;height:420px;background:#5D6B99;border:1px solid #22407A"></div>
<div class="a" style="left:35px;top:553px;width:1141px;height:32px;background:#40568D;"></div>
<svg class="a" style="left:47px;top:561px;" width="20" height="20" viewBox="0 0 20 20"><path d="M0.7 5 L2.5 4 L7 7.5 L12.8 2 L13.5 2.3 V8.5 L10.5 10 L13.5 12 V17.8 L12.5 18.2 L1.5 6.8 Z M0.8 6.3 Q-0.6 10 0.8 14 L2 13.6 Q1 10 2.1 7.4 Z M0.5 15 L1.8 16.2 L6.2 12.3 L5.2 11.2 Z M15 0 L20 2.2 V17.5 L15 19.8 Z" fill="#fff"/></svg>
<div class="a t" style="left:79px;top:564px;color:#fff;-webkit-text-stroke:0.05px #fff">NewSite - GetClaimUserId.cs</div>
<div class="a" style="left:1088px;top:568px;width:9px;height:3px;background:#E8ECF8;"></div>
<svg class="a" style="left:1122px;top:562px;" width="10" height="10" viewBox="0 0 10 10"><rect x="0.5" y="0.5" width="9" height="9" fill="none" stroke="#E8ECF8"/><rect x="0.5" y="0.5" width="9" height="2" fill="#E8ECF8"/></svg>
<svg class="a" style="left:1155px;top:562px;" width="11" height="9" viewBox="0 0 11 9"><path d="M0.5 0.3L10.5 8.7M10.5 0.3L0.5 8.7" stroke="#E8ECF8" stroke-width="1.2"/></svg>
<div class="a" style="left:42px;top:591px;width:143px;height:20px;background:#F5CC84;"></div>
<div class="a t" style="left:46px;top:594px;">GetClaimUserId.cs</div>
<svg class="a" style="left:152px;top:599px;" width="9" height="8" viewBox="0 0 9 8"><path d="M0 4.5H3.5M3.5 1V7.5M3.5 1.5H7.5V5.5H3.5" stroke="#1E1E1E" fill="none"/></svg>
<svg class="a" style="left:170px;top:598px;" width="10" height="9" viewBox="0 0 10 9"><path d="M0.5 0.5L9.5 8.5M9.5 0.5L0.5 8.5" stroke="#3A3A3A" stroke-width="1.2"/></svg>
<svg class="a" style="left:1141px;top:600px;" width="9" height="5" viewBox="0 0 9 5"><path d="M0 0H9L4.5 5Z" fill="#E6EAF8"/></svg>
<svg class="a" style="left:1158px;top:594px;" width="12" height="12" viewBox="0 0 12 12"><circle cx="6" cy="6" r="3.2" fill="none" stroke="#E6EAF8" stroke-width="2.2"/><path d="M6 0V12M0 6H12M1.8 1.8L10.2 10.2M10.2 1.8L1.8 10.2" stroke="#E6EAF8" stroke-width="1.6"/><circle cx="6" cy="6" r="1.3" fill="#5D6B99"/></svg>
<div class="a" style="left:42px;top:611px;width:1128px;height:2px;background:#F5CC84;"></div>
<div class="a" style="left:42px;top:613px;width:1128px;height:21px;background:#EEF1FA;border-bottom:1px solid #B8C4E6"></div>
<div class="a" style="left:416px;top:613px;width:3px;height:20px;background:#B9C3E3;"></div>
<div class="a" style="left:792px;top:613px;width:3px;height:20px;background:#B9C3E3;"></div>
<svg class="a" style="left:46px;top:616px;" width="14" height="13" viewBox="0 0 14 13"><rect x="0.5" y="0.5" width="13" height="11" fill="#EEF1FA" stroke="#333"/><rect x="0.5" y="0.5" width="13" height="2" fill="#333"/><circle cx="4.6" cy="8.4" r="4.6" fill="#1E90E0"/><path d="M0.5 8.4H8.7M4.6 4V12.8M2.3 5.5Q3.8 8.4 2.3 11.3M6.9 5.5Q5.4 8.4 6.9 11.3" stroke="#fff" stroke-width="0.8" fill="none"/></svg>
<div class="a t" style="left:63px;top:615px;letter-spacing:0.1px">WebApi1</div>
<svg class="a" style="left:405px;top:621px;" width="7" height="4" viewBox="0 0 7 4"><path d="M0 0H7L3.5 4Z" fill="#1E1E1E"/></svg>
<svg class="a" style="left:423px;top:615px;" width="16" height="16" viewBox="0 0 16 16"><path d="M4.5 0.5L8.5 4.5L4.5 8.5L0.5 4.5Z" fill="#D88A20"/><path d="M7 6H10.5V11" stroke="#D88A20" stroke-width="1.3" fill="none"/><path d="M11.5 8L15 11.5L11.5 15L8 11.5Z" fill="#D88A20"/></svg>
<div class="a t" style="left:440px;top:616px;letter-spacing:-0.12px">CryptoChestNew.MicroServices.WebApi1.UserHelpers</div>
<svg class="a" style="left:782px;top:621px;" width="7" height="4" viewBox="0 0 7 4"><path d="M0 0H7L3.5 4Z" fill="#1E1E1E"/></svg>
<svg class="a" style="left:799px;top:614px;" width="14" height="14" viewBox="0 0 14 14"><path d="M5.5 1L10 3.5V8.5L5.5 11L1 8.5V3.5Z M1 3.5L5.5 6L10 3.5M5.5 6V11" stroke="#7A3DB8" stroke-width="1.1" fill="none"/><path d="M11 7V12M9 10L11 12.5L13 10" stroke="#333" stroke-width="1" fill="none"/></svg>
<div class="a t" style="left:817px;top:616px;letter-spacing:-0.05px">GetUserId(IPrincipal principal)</div>
<svg class="a" style="left:1159px;top:621px;" width="7" height="4" viewBox="0 0 7 4"><path d="M0 0H7L3.5 4Z" fill="#1E1E1E"/></svg>
<div class="a" style="left:42px;top:634px;width:1128px;height:313px;background:#fff;overflow:hidden">
<div class="a" style="left:0px;top:0px;width:17px;height:313px;background:#E6E7E8;"></div>
<div class="a" style="left:95px;top:178px;width:1013px;height:19px;background:transparent;border:2px solid #EAEBF2"></div>
<div class="a" style="left:327px;top:179px;width:73px;height:17px;background:#E3E7D7;border:1px solid #C8CCB8"></div>
<div class="a m" style="left:96px;top:1px;"><span class="k">using</span> System.Security.Claims;</div>
<div class="a m" style="left:96px;top:20px;"><span class="k">using</span> System.Security.Principal;</div>
<div class="a m" style="left:96px;top:39px;"><span class="k">using</span> System.Threading.Tasks;</div>
<div class="a m" style="left:96px;top:77px;"><span class="k">namespace</span> CryptoChestNew.MicroServices.WebApi1</div>
<div class="a m" style="left:96px;top:96px;">{</div>
<div class="a m" style="left:128px;top:128px;"><span class="k">public</span> <span class="k">static</span> <span class="k">class</span> <span class="ty">UserHelpers</span></div>
<div class="a m" style="left:128px;top:147px;">{</div>
<div class="a m" style="left:160px;top:179px;"><span class="k">public</span> <span class="k">static</span> <span class="k">string</span> GetUserId(<span class="k">this</span> <span class="ty">IPrincipal</span> principal)</div>
<div class="a m" style="left:160px;top:198px;">{</div>
<div class="a m" style="left:192px;top:217px;"><span class="k">var</span> claimsIdentity = (<span class="ty">ClaimsIdentity</span>)principal.Identity;</div>
<div class="a m" style="left:192px;top:236px;"><span class="k">var</span> claim = claimsIdentity.FindFirst(System.Security.Claims.<span class="ty">ClaimTypes</span>.NameIdentifier);</div>
<div class="a m" style="left:192px;top:255px;"><span class="k">return</span> claim.Value;</div>
<div class="a m" style="left:160px;top:274px;">}</div>
<div class="a m" style="left:128px;top:293px;">}</div>
<div class="a m ln" style="left:0px;top:1px;width:58px">4</div>
<div class="a m ln" style="left:0px;top:20px;width:58px">5</div>
<div class="a m ln" style="left:0px;top:39px;width:58px">6</div>
<div class="a m ln" style="left:0px;top:58px;width:58px">7</div>
<div class="a m ln" style="left:0px;top:77px;width:58px">8</div>
<div class="a m ln" style="left:0px;top:96px;width:58px">9</div>
<div class="a m ln" style="left:0px;top:128px;width:58px">10</div>
<div class="a m ln" style="left:0px;top:147px;width:58px">11</div>
<div class="a m ln" style="left:0px;top:179px;width:58px">12</div>
<div class="a m ln" style="left:0px;top:198px;width:58px">13</div>
<div class="a m ln" style="left:0px;top:217px;width:58px">14</div>
<div class="a m ln" style="left:0px;top:236px;width:58px">15</div>
<div class="a m ln" style="left:0px;top:255px;width:58px">16</div>
<div class="a m ln" style="left:0px;top:274px;width:58px">17</div>
<div class="a m ln" style="left:0px;top:293px;width:58px">18</div>
<div class="a t" style="left:128px;top:115px;font-size:10px;line-height:12px;color:#6A6A6A;letter-spacing:0.3px;-webkit-text-stroke:0">0 references</div>
<div class="a t" style="left:160px;top:166px;font-size:10px;line-height:12px;color:#6A6A6A;letter-spacing:0.3px;-webkit-text-stroke:0">3 references</div>
<div class="a" style="left:90px;top:0px;width:1px;height:57px;background:#A5A5A5;"></div>
<div class="a" style="left:90px;top:56px;width:5px;height:1px;background:#A5A5A5;"></div>
<div class="a" style="left:90px;top:90px;width:1px;height:223px;background:#A5A5A5;"></div>
<div class="a" style="left:85px;top:80px;width:9px;height:11px;background:#fff;"></div>
<div class="a" style="left:85px;top:81px;width:9px;height:9px;background:#fff;border:1px solid #A5A5A5"></div>
<div class="a" style="left:87px;top:85px;width:5px;height:1px;background:#444;"></div>
<div class="a" style="left:85px;top:131px;width:9px;height:11px;background:#fff;"></div>
<div class="a" style="left:85px;top:132px;width:9px;height:9px;background:#fff;border:1px solid #A5A5A5"></div>
<div class="a" style="left:87px;top:136px;width:5px;height:1px;background:#444;"></div>
<div class="a" style="left:85px;top:182px;width:9px;height:11px;background:#fff;"></div>
<div class="a" style="left:85px;top:183px;width:9px;height:9px;background:#fff;border:1px solid #A5A5A5"></div>
<div class="a" style="left:87px;top:187px;width:5px;height:1px;background:#444;"></div>
<div class="a" style="left:90px;top:291px;width:5px;height:1px;background:#A5A5A5;"></div>
<div class="a" style="left:90px;top:310px;width:5px;height:1px;background:#A5A5A5;"></div>
<div class="a" style="left:100px;top:114px;width:1px;height:199px;background:transparent;background-image:linear-gradient(transparent 50%,#555 50%);background-size:1px 6px;background-position:0 2px"></div>
<div class="a" style="left:132px;top:163px;width:1px;height:127px;background:transparent;background-image:linear-gradient(transparent 50%,#555 50%);background-size:1px 6px;background-position:0 1px"></div>
<div class="a" style="left:164px;top:216px;width:1px;height:57px;background:transparent;background-image:linear-gradient(transparent 50%,#555 50%);background-size:1px 6px;background-position:0 2px"></div>
<div class="a" style="left:1109px;top:0px;width:19px;height:313px;background:#E8EAF0;"></div>
<div class="a" style="left:1109px;top:0px;width:19px;height:18px;background:#E6ECFB;border:1px solid #8FA6CF"></div>
<svg class="a" style="left:1113px;top:2px" width="12" height="14"><path d="M6 2.5V6.5M6 8.5V11.5M0.8 6.8H11.2M0.8 8.8H11.2" stroke="#1E1E1E" stroke-width="1.1" fill="none"/><path d="M3.8 3.2L6 0.5L8.2 3.2Z M3.8 10.8L6 13.5L8.2 10.8Z" fill="#1E1E1E"/></svg>
<svg class="a" style="left:1114px;top:23px" width="9" height="5"><path d="M0 5L4.5 0L9 5Z" fill="#9AA0B0"/></svg>
<svg class="a" style="left:1114px;top:301px" width="9" height="5"><path d="M0 0L4.5 5L9 0Z" fill="#9AA0B0"/></svg>
<div class="a" style="left:1114px;top:46px;width:9px;height:77px;background:#C2C3C9;"></div>
<div class="a" style="left:1109px;top:79px;width:19px;height:2px;background:#0000E0;"></div>
</div>
<div class="a" style="left:42px;top:947px;width:1128px;height:17px;background:#E8EAF2;"></div>
<div class="a" style="left:42px;top:947px;width:59px;height:17px;background:#F8F9FD;border:1px solid #CCD3EA"></div>
<div class="a t" style="left:44px;top:948px;font-size:11.5px;letter-spacing:-0.4px">100 %</div>
<svg class="a" style="left:90px;top:954px;" width="7" height="4" viewBox="0 0 7 4"><path d="M0 0H7L3.5 4Z" fill="#1E1E1E"/></svg>
<svg class="a" style="left:125px;top:949px;" width="12" height="12" viewBox="0 0 12 12"><circle cx="6" cy="6" r="6" fill="#2A9A3A"/><path d="M3 6L5.2 8.2L9 4" stroke="#fff" stroke-width="1.8" fill="none"/></svg>
<div class="a t" style="left:142px;top:948px;">No issues found</div>
<div class="a" style="left:284px;top:949px;width:1px;height:13px;background:#C0C6DA;"></div>
<svg class="a" style="left:299px;top:948px;" width="13" height="14" viewBox="0 0 13 14"><path d="M9 1L5 6M7 7L3 12L1 10L5 5Z" stroke="#333" stroke-width="1.2" fill="none"/><path d="M10 1L12 3" stroke="#333"/></svg>
<svg class="a" style="left:315px;top:954px;" width="7" height="4" viewBox="0 0 7 4"><path d="M0 0H7L3.5 4Z" fill="#1E1E1E"/></svg>
<svg class="a" style="left:352px;top:951px;" width="5" height="9" viewBox="0 0 5 9"><path d="M5 0V9L0 4.5Z" fill="#C8CCDA"/></svg>
<svg class="a" style="left:962px;top:951px;" width="5" height="9" viewBox="0 0 5 9"><path d="M0 0V9L5 4.5Z" fill="#C8CCDA"/></svg>
<div class="a t" style="left:997px;top:948px;font-size:12px">Ln: 12</div>
<div class="a t" style="left:1045px;top:948px;font-size:12px">Ch: 35</div>
<div class="a t" style="left:1096px;top:948px;font-size:12px">SPC</div>
<div class="a t" style="left:1135px;top:948px;font-size:12px">CRLF</div>
<div class="a" style="left:0px;top:1137px;width:1600px;height:23px;background:#40568D;"></div>
<svg class="a" style="left:5px;top:1142px;" width="15" height="11" viewBox="0 0 15 11"><path d="M3.5 0.5H14.5L11.5 10.5H0.5Z" fill="none" stroke="#fff" stroke-width="1.2"/></svg>
<div class="a t" style="left:29px;top:1141px;color:#fff;-webkit-text-stroke:0.05px #fff">Ready</div>
<svg class="a" style="left:1231px;top:1141px;" width="10" height="13" viewBox="0 0 10 13"><path d="M5 13V2M1 5.5L5 1.5L9 5.5" stroke="#fff" stroke-width="1.8" fill="none"/></svg>
<div class="a t" style="left:1251px;top:1141px;color:#fff;-webkit-text-stroke:0.05px #fff">41</div>
<svg class="a" style="left:1287px;top:1141px;" width="12" height="12" viewBox="0 0 12 12"><path d="M1 11L2 8L8.5 1.5L10.5 3.5L4 10Z" fill="#fff"/></svg>
<div class="a t" style="left:1306px;top:1141px;color:#fff;-webkit-text-stroke:0.05px #fff">1</div>
<svg class="a" style="left:1335px;top:1141px;" width="14" height="14" viewBox="0 0 14 14"><path d="M7 0.5L13.5 7L7 13.5L0.5 7Z" fill="#fff"/><circle cx="6" cy="5" r="1.3" fill="#40568D"/><circle cx="8.5" cy="9" r="1.3" fill="#40568D"/><path d="M6 5L8.5 9" stroke="#40568D"/></svg>
<div class="a t" style="left:1357px;top:1141px;color:#fff;-webkit-text-stroke:0.05px #fff">CryptoChestNew</div>
<svg class="a" style="left:1468px;top:1141px;" width="14" height="13" viewBox="0 0 14 13"><path d="M2 1L7 7V12.5M12 1L7 7" stroke="#fff" stroke-width="2" fill="none"/><circle cx="2" cy="2" r="1.8" fill="#fff"/><circle cx="12" cy="2" r="1.8" fill="#fff"/></svg>
<div class="a t" style="left:1491px;top:1141px;color:#fff;-webkit-text-stroke:0.05px #fff">master</div>
<svg class="a" style="left:1532px;top:1145px;" width="8" height="5" viewBox="0 0 8 5"><path d="M0 5L4 0L8 5Z" fill="#fff"/></svg>
<svg class="a" style="left:1567px;top:1141px;" width="14" height="14" viewBox="0 0 14 14"><path d="M7 1Q11.5 1 11.5 6V9.5L13 11H1L2.5 9.5V6Q2.5 1 7 1Z" fill="#fff"/><path d="M5 12Q7 14.5 9 12" fill="#fff"/></svg>
<div class="a" style="left:0px;top:1160px;width:1600px;height:40px;background:#34302A;"></div>
<div class="a" style="left:1226px;top:1160px;width:45px;height:40px;background:#514D46;"></div>
<svg class="a" style="left:16px;top:1170px;" width="16" height="18" viewBox="0 0 16 18"><path d="M0 2.2L7 1.2V8.3H0Z M8 1.05L16 0V8.3H8Z M0 9.3H7V16.3L0 15.3Z M8 9.3H16V17.5L8 16.4Z" fill="#fff"/></svg>
<svg class="a" style="left:63px;top:1172px;" width="19" height="16" viewBox="0 0 19 16"><path d="M1 2H12V5M1 2V5M1 11V14H12V11M1 5H12V11H1Z" fill="none" stroke="#fff" stroke-width="1.3"/><path d="M15 1V15M17.5 1V15" stroke="#fff" stroke-width="1.3"/><rect x="14" y="6" width="5" height="3" fill="#fff"/></svg>
<svg class="a" style="left:109px;top:1167px;" width="26" height="26" viewBox="0 0 26 26"><circle cx="13" cy="13" r="11" fill="#E24A1F"/><circle cx="13" cy="13" r="6.5" fill="#3A1F8A"/><path d="M4 8Q8 1 16 2Q22 4 24 11Q20 6 15 7Q9 8 9 14Z" fill="#FFB02A"/></svg>
<svg class="a" style="left:159px;top:1167px;" width="26" height="26" viewBox="0 0 26 26"><path d="M4 14L12 22L22 12L14 4Z" fill="#3BA85F"/><path d="M4 14L14 4L10 2L2 10Z" fill="#E54D2E"/><circle cx="10" cy="10" r="6" fill="none" stroke="#B8C8D8" stroke-width="2.5"/><path d="M14 14L20 20" stroke="#555" stroke-width="3"/></svg>
<svg class="a" style="left:208px;top:1168px;" width="24" height="24" viewBox="0 0 24 24"><path d="M1 4H9L11 6H23V21H1Z" fill="#E8B43C"/><path d="M1 9H23V21H1Z" fill="#F9CF5B"/><rect x="7" y="14" width="10" height="7" fill="#2F7FD2"/></svg>
<svg class="a" style="left:257px;top:1168px;" width="24" height="24" viewBox="0 0 24 24"><rect x="0.5" y="3" width="23" height="18" fill="#111" stroke="#9A9A9A"/><rect x="0.5" y="3" width="23" height="2.5" fill="#9A9A9A"/><path d="M3 9H7M3 12H10" stroke="#ddd"/></svg>
<svg class="a" style="left:306px;top:1168px;" width="24" height="24" viewBox="0 0 24 24"><rect x="1" y="1" width="22" height="22" rx="1" fill="#1C3F98"/><rect x="5" y="1" width="12" height="7" fill="#E8E8F0"/><rect x="3" y="11" width="18" height="11" fill="#E02828"/><path d="M4 14H20M4 17H20M4 20H20" stroke="#fff" stroke-width="1"/></svg>
<svg class="a" style="left:355px;top:1168px;" width="24" height="24" viewBox="0 0 24 24"><rect x="1" y="1" width="22" height="22" fill="#001E36" stroke="#3C9CE8" stroke-width="1.5"/><text x="4" y="17" font-family="Liberation Sans" font-weight="bold" font-size="12" fill="#31A8FF">Ps</text></svg>
<svg class="a" style="left:404px;top:1168px;" width="24" height="24" viewBox="0 0 24 24"><circle cx="14" cy="13" r="8" fill="#F08A24"/><circle cx="14" cy="13" r="4.5" fill="#fff"/><circle cx="14" cy="13" r="2.5" fill="#265787"/><path d="M1 9H12M3 5L12 11" stroke="#F08A24" stroke-width="2.5"/></svg>
<svg class="a" style="left:453px;top:1168px;" width="24" height="24" viewBox="0 0 24 24"><path d="M3 14Q3 3 12 3Q21 3 21 14" stroke="#1530D8" stroke-width="2.6" fill="none"/><rect x="1" y="11" width="5" height="10" rx="2.5" fill="#1530D8"/><rect x="18" y="11" width="5" height="10" rx="2.5" fill="#1530D8"/><ellipse cx="12" cy="15" rx="6" ry="5" fill="#F0A020"/><path d="M6 15H18" stroke="#E02020" stroke-width="2"/></svg>
<svg class="a" style="left:502px;top:1168px;" width="24" height="24" viewBox="0 0 24 24"><path d="M3 2H17L21 6V23H3Z" fill="#F4F6F0" stroke="#999" stroke-width="0.8"/><rect x="3" y="12" width="18" height="11" fill="#6CC04A"/><path d="M7 9V17M9 14H12" stroke="#333" stroke-width="1.2"/><path d="M13 17L22 2" stroke="#E8B030" stroke-width="2.2"/></svg>
<svg class="a" style="left:551px;top:1168px;" width="24" height="24" viewBox="0 0 24 24"><ellipse cx="12" cy="14" rx="11" ry="6" fill="none" stroke="#E8A21C" stroke-width="2.5"/><circle cx="12" cy="14" r="3.5" fill="#C42828"/><path d="M4 6L7 9M12 3V7M20 6L17 9" stroke="#E8A21C" stroke-width="2"/></svg>
<svg class="a" style="left:600px;top:1168px;" width="24" height="24" viewBox="0 0 24 24"><rect x="2" y="2" width="7" height="7" fill="#E8C43C"/><path d="M3 12V22H13" stroke="#7BC043" stroke-width="1.5" stroke-dasharray="2 2" fill="none"/><path d="M10 20L22 8M14 8L22 18" stroke="#ddd" stroke-width="3"/></svg>
<svg class="a" style="left:649px;top:1168px;" width="24" height="24" viewBox="0 0 24 24"><path d="M2 12Q6 5 12 12Q18 19 22 12Q18 5 12 12Q6 19 2 12Z" fill="none" stroke="#5E7CE0" stroke-width="2.5"/></svg>
<svg class="a" style="left:698px;top:1168px;" width="24" height="24" viewBox="0 0 24 24"><rect x="2" y="8" width="13" height="13" rx="2" fill="none" stroke="#7CC040" stroke-width="3"/><rect x="9" y="2" width="13" height="13" rx="2" fill="none" stroke="#7CC040" stroke-width="3"/><rect x="10.5" y="9.5" width="3" height="4" fill="#F0B020"/></svg>
<svg class="a" style="left:747px;top:1168px;" width="24" height="24" viewBox="0 0 24 24"><path d="M2 4L21 1L22 6L3 9Z" fill="#222" stroke="#eee" stroke-width="0.8"/><rect x="2" y="9" width="20" height="13" fill="#F5F5F5"/><text x="2.5" y="20" font-family="Liberation Sans" font-weight="bold" font-size="9.5" fill="#D04020">3</text><text x="8.5" y="20" font-family="Liberation Sans" font-weight="bold" font-size="9.5" fill="#30A040">2</text><text x="14.5" y="20" font-family="Liberation Sans" font-weight="bold" font-size="9.5" fill="#2060C0">1</text></svg>
<svg class="a" style="left:796px;top:1168px;" width="24" height="24" viewBox="0 0 24 24"><circle cx="12" cy="12" r="11" fill="#1B8FE0"/><path d="M4 13Q10 8 14 14Q17 9 21 10Q17 12 15 17Q10 13 4 13Z" fill="#fff"/></svg>
<svg class="a" style="left:845px;top:1168px;" width="24" height="24" viewBox="0 0 24 24"><ellipse cx="12" cy="12" rx="10" ry="11" fill="#E81B24"/><ellipse cx="12" cy="12" rx="4.5" ry="8" fill="#2B2924"/></svg>
<svg class="a" style="left:894px;top:1168px;" width="24" height="24" viewBox="0 0 24 24"><path d="M6 2H22L18 22H2Z" fill="#A8D8E8"/><path d="M6 2H22L21 6H5Z" fill="#6AA8C8"/></svg>
<svg class="a" style="left:943px;top:1168px;" width="24" height="24" viewBox="0 0 24 24"><g transform="translate(1 1) scale(1.1)"><path d="M0.7 5 L2.5 4 L7 7.5 L12.8 2 L13.5 2.3 V8.5 L10.5 10 L13.5 12 V17.8 L12.5 18.2 L1.5 6.8 Z M0.8 6.3 Q-0.6 10 0.8 14 L2 13.6 Q1 10 2.1 7.4 Z M0.5 15 L1.8 16.2 L6.2 12.3 L5.2 11.2 Z M15 0 L20 2.2 V17.5 L15 19.8 Z" fill="#A77DE0"/></g></svg>
<svg class="a" style="left:992px;top:1168px;" width="24" height="24" viewBox="0 0 24 24"><circle cx="9" cy="9" r="8" fill="#2F7FD0"/><path d="M2 7Q6 2 12 4Q10 9 5 12Z" fill="#7CC040"/><path d="M4 2Q8 0 12 2" stroke="#F0C020" stroke-width="2" fill="none"/><rect x="13" y="6" width="9" height="17" fill="#C8CCD4" stroke="#888" stroke-width="0.6"/><path d="M15 10H20M15 13H20M15 16H20" stroke="#555"/></svg>
<svg class="a" style="left:1041px;top:1168px;" width="24" height="24" viewBox="0 0 24 24"><rect x="1" y="2" width="22" height="20" rx="2" fill="#111" stroke="#555"/><text x="3" y="17" font-family="Liberation Sans" font-weight="bold" font-size="11" fill="#4FA0F0">m</text><text x="12" y="17" font-family="Liberation Sans" font-weight="bold" font-size="12" fill="#fff">R</text></svg>
<svg class="a" style="left:1090px;top:1168px;" width="24" height="24" viewBox="0 0 24 24"><circle cx="12" cy="12" r="11" fill="#0A0A0A"/><path d="M13 5L6 17L19 15Z" fill="none" stroke="#40B8F0" stroke-width="2.4"/><circle cx="13" cy="5" r="3" fill="#40B8F0"/><circle cx="6" cy="17" r="3" fill="#40B8F0"/><circle cx="19" cy="15" r="3" fill="#40B8F0"/></svg>
<svg class="a" style="left:1139px;top:1168px;" width="24" height="24" viewBox="0 0 24 24"><path d="M4 8Q12 2 20 8M4 16Q12 22 20 16M8 4Q2 12 8 20M16 4Q22 12 16 20M6 6L18 18M18 6L6 18" stroke="#fff" stroke-width="2.6" fill="none"/></svg>
<svg class="a" style="left:1188px;top:1168px;" width="24" height="24" viewBox="0 0 24 24"><path d="M2 6L12 3L22 6L20 20H4Z" fill="#C8D8E8"/><text x="6" y="16" font-family="Liberation Serif" font-size="11" fill="#335">λ</text></svg>
<svg class="a" style="left:1237px;top:1168px;" width="24" height="24" viewBox="0 0 24 24"><g transform="translate(1 1) scale(1.1)"><path d="M0.7 5 L2.5 4 L7 7.5 L12.8 2 L13.5 2.3 V8.5 L10.5 10 L13.5 12 V17.8 L12.5 18.2 L1.5 6.8 Z M0.8 6.3 Q-0.6 10 0.8 14 L2 13.6 Q1 10 2.1 7.4 Z M0.5 15 L1.8 16.2 L6.2 12.3 L5.2 11.2 Z M15 0 L20 2.2 V17.5 L15 19.8 Z" fill="#8A5AD8"/></g></svg>
<div class="a" style="left:1226px;top:1197px;width:45px;height:3px;background:#76B9ED;"></div>
<div class="a" style="left:103px;top:1197px;width:40px;height:3px;background:#76B9ED;"></div>
<div class="a" style="left:201px;top:1197px;width:36px;height:3px;background:#76B9ED;"></div>
<div class="a" style="left:238px;top:1197px;width:3px;height:3px;background:#76B9ED;"></div>
<div class="a" style="left:348px;top:1197px;width:40px;height:3px;background:#76B9ED;"></div>
<div class="a" style="left:495px;top:1197px;width:40px;height:3px;background:#76B9ED;"></div>
<div class="a" style="left:544px;top:1197px;width:40px;height:3px;background:#76B9ED;"></div>
<svg class="a" style="left:1286px;top:1168px;" width="24" height="24" viewBox="0 0 24 24"><rect x="1" y="1" width="22" height="22" rx="2" fill="#E8F8F8" stroke="#30C8D8" stroke-width="2"/><rect x="4" y="4" width="16" height="16" fill="#fff" stroke="#111"/><text x="7" y="17" font-family="Liberation Serif" font-style="italic" font-size="13" fill="#111">F</text></svg>
<div class="a" style="left:1280px;top:1197px;width:40px;height:3px;background:#76B9ED;"></div>
<svg class="a" style="left:1330px;top:1172px;" width="16" height="16" viewBox="0 0 16 16"><rect x="0" y="0" width="16" height="16" fill="#FFE800" stroke="#2080C0"/><text x="3" y="13" font-family="Liberation Serif" font-size="12" fill="#111">F</text></svg>
<svg class="a" style="left:1354px;top:1172px;" width="16" height="16" viewBox="0 0 16 16"><rect x="0" y="0" width="16" height="16" fill="#1020A0"/><rect x="4" y="0" width="12" height="16" fill="#C01010"/><text x="5" y="13" font-family="Liberation Sans" font-weight="bold" font-size="13" fill="#FFE000">?</text></svg>
<svg class="a" style="left:1378px;top:1172px;" width="18" height="16" viewBox="0 0 18 16"><rect x="2" y="2" width="14" height="9" fill="none" stroke="#fff" stroke-width="1.2"/><path d="M5 14H13M9 11V14M0 0H6V5H0Z" stroke="#fff" fill="none"/></svg>
<svg class="a" style="left:1403px;top:1172px;" width="16" height="16" viewBox="0 0 16 16"><rect x="2" y="1" width="12" height="15" rx="5" fill="#E0E0E0"/><path d="M8 1V7M2 7H14" stroke="#999"/></svg>
<svg class="a" style="left:1426px;top:1172px;" width="18" height="17" viewBox="0 0 18 17"><path d="M1 6H4L8 2V15L4 11H1Z" fill="none" stroke="#fff" stroke-width="1.2"/><path d="M10 6Q12 8.5 10 11M12 4Q15 8.5 12 13M14 2Q18 8.5 14 15" stroke="#fff" fill="none"/></svg>
<div class="a t" style="left:1450px;top:1172px;color:#fff;-webkit-text-stroke:0.05px #fff">ENG</div>
<div class="a t" style="left:1493px;top:1163px;color:#fff;width:44px;text-align:center;-webkit-text-stroke:0.05px #fff">8:07 PM</div>
<div class="a t" style="left:1488px;top:1180px;color:#fff;width:54px;text-align:center;-webkit-text-stroke:0.05px #fff">5/9/2020</div>
<svg class="a" style="left:1558px;top:1170px;" width="22" height="22" viewBox="0 0 22 22"><path d="M1 1H19V14H7L3 18V14H1Z" fill="#fff"/><path d="M4 5H16M4 8H16M4 11H12" stroke="#2B2924"/><circle cx="16" cy="16" r="5" fill="#2B2924" stroke="#fff"/><text x="14" y="19" font-family="Liberation Sans" font-size="8" fill="#fff">1</text></svg>
<div class="a" style="left:1595px;top:1160px;width:1px;height:40px;background:#666;"></div></body></html>
